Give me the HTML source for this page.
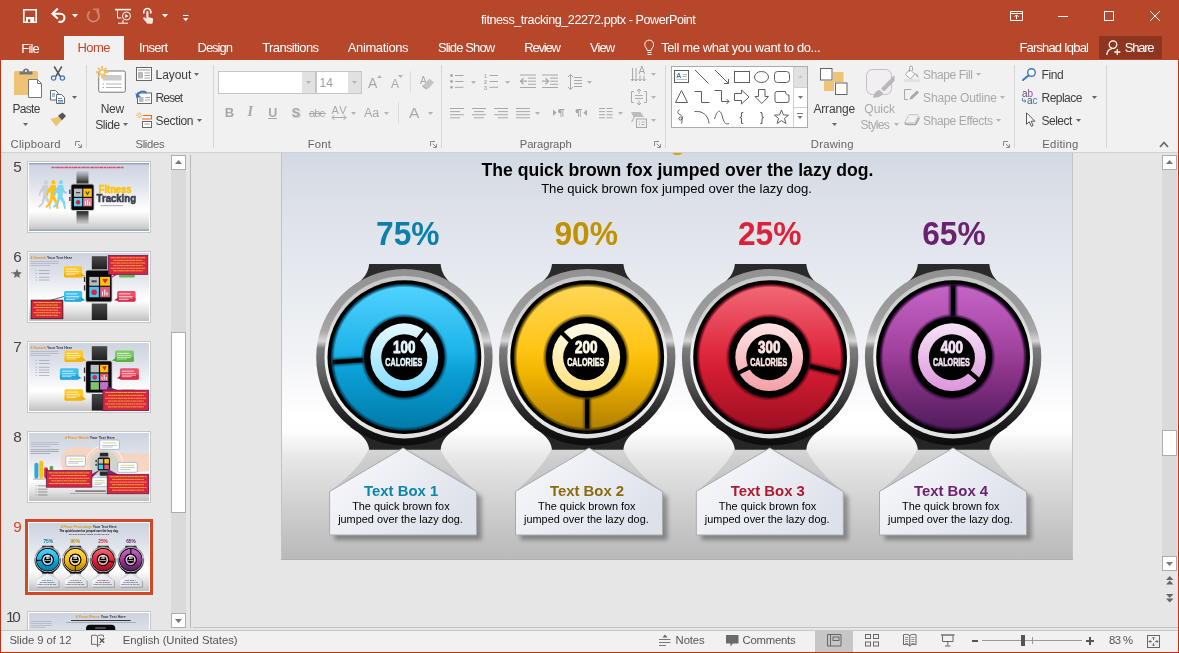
<!DOCTYPE html>
<html lang="en">
<head>
<meta charset="utf-8">
<title>fitness_tracking_22272.pptx - PowerPoint</title>
<style>
*{box-sizing:border-box;margin:0;padding:0}
html,body{width:1179px;height:653px;overflow:hidden;background:#e6e6e6}
body{font-family:"Liberation Sans",sans-serif;font-size:12px;color:#444;position:relative}
.t{position:absolute;white-space:nowrap;line-height:1.2}
#win{position:absolute;left:0;top:0;width:1179px;height:653px;overflow:hidden;background:#e6e6e6;will-change:transform}
#titlebar{position:absolute;left:0;top:0;width:1179px;height:60px;background:#b7472a}
#ribbon{position:absolute;left:0;top:60px;width:1179px;height:93px;background:#f1f1f1;border-bottom:1px solid #d2d2d2}
#status{position:absolute;left:0;top:630px;width:1179px;height:23px;background:#f1f1f1;border-top:1px solid #c8c8c8}
#hometab{position:absolute;left:64px;top:36px;width:60px;height:25px;background:#f1f1f1}
svg{position:absolute;overflow:visible}
</style>
</head>
<body>
<div id="win">
<div id="titlebar">
<div class="t" style="left:481px;top:13px;font-size:12.6px;color:#fff;letter-spacing:-0.45px;">fitness_tracking_22272.pptx - PowerPoint</div>
<div id="hometab"></div>
<div class="t" style="left:21.3px;top:41px;font-size:13px;color:#fff;letter-spacing:-0.85px;">File</div>
<div class="t" style="left:77.4px;top:40px;font-size:13px;color:#c4472c;letter-spacing:-0.56px;">Home</div>
<div class="t" style="left:139.1px;top:40px;font-size:13px;color:#fff;letter-spacing:-0.72px;">Insert</div>
<div class="t" style="left:197.5px;top:40px;font-size:13px;color:#fff;letter-spacing:-1.01px;">Design</div>
<div class="t" style="left:262.3px;top:40px;font-size:13px;color:#fff;letter-spacing:-0.64px;">Transitions</div>
<div class="t" style="left:347.8px;top:40px;font-size:13px;color:#fff;letter-spacing:-0.39px;">Animations</div>
<div class="t" style="left:438px;top:40px;font-size:13px;color:#fff;letter-spacing:-0.88px;">Slide Show</div>
<div class="t" style="left:524.2px;top:40px;font-size:13px;color:#fff;letter-spacing:-1.19px;">Review</div>
<div class="t" style="left:590px;top:40px;font-size:13px;color:#fff;letter-spacing:-0.91px;">View</div>
<div class="t" style="left:661.2px;top:40px;font-size:13px;color:#fff;letter-spacing:-0.41px;">Tell me what you want to do...</div>
<div class="t" style="left:1019.4px;top:40px;font-size:13px;color:#fff;letter-spacing:-0.83px;">Farshad Iqbal</div>
<div style="position:absolute;left:1099px;top:36px;width:63px;height:23px;background:#8e3520;"></div>
<div class="t" style="left:1124.8px;top:40px;font-size:13px;color:#fff;letter-spacing:-1.25px;">Share</div>
<svg style="left:23px;top:9px;" width="14" height="14" viewBox="0 0 14 14"><path d="M0.8 0.8h12.400v12.400h-12.400z" stroke="#fff" fill="none" stroke-width="1.600"/><rect x="3" y="8" width="8.200" height="5.200" fill="#fff"/><rect x="5" y="10.200" width="2.300" height="3" fill="#b7472a"/></svg>
<svg style="left:51px;top:8px;" width="16" height="15" viewBox="0 0 16 15"><path d="M3 5.700h6.400a4.100 4.100 0 0 1 0 8.200h-1.900" stroke="#fff" fill="none" stroke-width="2.100"/><path d="M6.800 0.600l-5.300 5.100l5.300 5.100" stroke="#fff" fill="none" stroke-width="2.100"/></svg>
<svg style="left:71.5px;top:14px;" width="6" height="4" viewBox="0 0 6 4"><path d="M0 0h6l-3 3.5z" fill="#fff"/></svg>
<svg style="left:86px;top:8px;" width="15" height="15" viewBox="0 0 15 15"><path d="M10.300 3.100a5.700 5.700 0 1 1 -6.300 0.300" stroke="#cf846f" fill="none" stroke-width="1.800"/><path d="M7.200 1.300h5v5" stroke="#cf846f" fill="none" stroke-width="1.800"/></svg>
<svg style="left:115px;top:8px;" width="17" height="16" viewBox="0 0 17 16"><path d="M0 1.6h16" stroke="#fff" fill="none" stroke-width="1.6"/><path d="M2.5 2v8h4" stroke="#fff" fill="none" stroke-width="1"/><circle cx="11.5" cy="8" r="4" stroke="#fff" fill="none" stroke-width="1"/><path d="M10.3 6l3 2l-3 2z" fill="#fff"/><path d="M3 15.2h10M8 12v3" stroke="#fff" fill="none" stroke-width="1"/></svg>
<svg style="left:142px;top:8px;" width="12" height="16" viewBox="0 0 12 16"><path d="M2 5.5a3.6 3.6 0 1 1 6.6 0" stroke="#fff" fill="none" stroke-width="1.5"/><path d="M4.3 4.2a1.1 1.1 0 0 1 2.2 0v5l3.6 0.8a1.3 1.3 0 0 1 1 1.4l-0.4 3.4a1.2 1.2 0 0 1 -1.2 1h-3.4a1.5 1.5 0 0 1 -1.2 -0.6l-3.6 -4.4a1 1 0 0 1 1.5 -1.3l1.5 1.3z" fill="#f2e6e2"/></svg>
<svg style="left:161.5px;top:14px;" width="6" height="4" viewBox="0 0 6 4"><path d="M0 0h6l-3 3.5z" fill="#fff"/></svg>
<svg style="left:183px;top:14.5px;" width="6" height="7" viewBox="0 0 6 7"><path d="M0 0.5h5.4" stroke="#fff" stroke-width="1"/><path d="M0 3h5.4l-2.7 3.2z" fill="#fff"/></svg>
<svg style="left:1010px;top:11px;" width="13" height="10" viewBox="0 0 13 10"><path d="M0.5 0.5h12v9h-12z M0.5 2.5h12" stroke="#fff" fill="none" stroke-width="1"/><path d="M6.5 8v-4M4.5 5.8l2-2l2 2" stroke="#fff" fill="none" stroke-width="1"/></svg>
<div style="position:absolute;left:1058px;top:16px;width:10px;height:1px;background:#fff;"></div>
<svg style="left:1104px;top:11px;" width="10" height="10" viewBox="0 0 10 10"><path d="M0.5 0.5h9v9h-9z" stroke="#fff" fill="none" stroke-width="1"/></svg>
<svg style="left:1150px;top:11px;" width="10" height="10" viewBox="0 0 10 10"><path d="M0 0l10 10M10 0l-10 10" stroke="#fff" fill="none" stroke-width="1"/></svg>
<svg style="left:644px;top:38.5px;" width="11" height="17" viewBox="0 0 11 17"><path d="M3.3 11.5c0-2-2.5-3-2.5-6a4.4 4.4 0 0 1 8.8 0c0 3-2.5 4-2.5 6z" stroke="#fff" fill="none" stroke-width="1"/><path d="M3.5 13.5h4M3.5 15.5h4" stroke="#fff" fill="none" stroke-width="1"/></svg>
<svg style="left:1106px;top:40px;" width="16" height="16" viewBox="0 0 16 16"><circle cx="7" cy="4.6" r="3.8" stroke="#fff" fill="none" stroke-width="1.3"/><path d="M0.8 15c0.3-3.6 2.5-6 5.4-6.3" stroke="#fff" fill="none" stroke-width="1.3"/><path d="M11.3 9v6M8.3 12h6" stroke="#fff" fill="none" stroke-width="1.3"/></svg>
</div>
<div id="ribbon"></div>
<div style="position:absolute;left:86px;top:65px;width:1px;height:83px;background:#d6d6d6;"></div>
<div style="position:absolute;left:213px;top:65px;width:1px;height:83px;background:#d6d6d6;"></div>
<div style="position:absolute;left:441px;top:65px;width:1px;height:83px;background:#d6d6d6;"></div>
<div style="position:absolute;left:665px;top:65px;width:1px;height:83px;background:#d6d6d6;"></div>
<div style="position:absolute;left:1014px;top:65px;width:1px;height:83px;background:#d6d6d6;"></div>
<div style="position:absolute;left:1106px;top:65px;width:1px;height:83px;background:#d6d6d6;"></div>
<div class="t" style="left:10.5px;top:138px;font-size:11.3px;color:#666;letter-spacing:0.22px;">Clipboard</div>
<div class="t" style="left:135.5px;top:138px;font-size:11.3px;color:#666;letter-spacing:-0.34px;">Slides</div>
<div class="t" style="left:307.8px;top:138px;font-size:11.3px;color:#666;letter-spacing:0.16px;">Font</div>
<div class="t" style="left:519.7px;top:138px;font-size:11.3px;color:#666;letter-spacing:-0.08px;">Paragraph</div>
<div class="t" style="left:810.8px;top:138px;font-size:11.3px;color:#666;letter-spacing:0.21px;">Drawing</div>
<div class="t" style="left:1042.3px;top:138px;font-size:11.3px;color:#666;letter-spacing:0.26px;">Editing</div>
<svg style="left:75px;top:141.3px" width="7" height="7" viewBox="0 0 7 7"><path d="M0.5 5v-4.5h4.5" stroke="#8a8a8a" fill="none" stroke-width="1"/><path d="M2.8 2.8l3.2 3.2M6.5 3.2v3.3h-3.3" stroke="#8a8a8a" fill="none" stroke-width="1"/></svg>
<svg style="left:430px;top:141.3px" width="7" height="7" viewBox="0 0 7 7"><path d="M0.5 5v-4.5h4.5" stroke="#8a8a8a" fill="none" stroke-width="1"/><path d="M2.8 2.8l3.2 3.2M6.5 3.2v3.3h-3.3" stroke="#8a8a8a" fill="none" stroke-width="1"/></svg>
<svg style="left:654px;top:141.3px" width="7" height="7" viewBox="0 0 7 7"><path d="M0.5 5v-4.5h4.5" stroke="#8a8a8a" fill="none" stroke-width="1"/><path d="M2.8 2.8l3.2 3.2M6.5 3.2v3.3h-3.3" stroke="#8a8a8a" fill="none" stroke-width="1"/></svg>
<svg style="left:1003px;top:141.3px" width="7" height="7" viewBox="0 0 7 7"><path d="M0.5 5v-4.5h4.5" stroke="#8a8a8a" fill="none" stroke-width="1"/><path d="M2.8 2.8l3.2 3.2M6.5 3.2v3.3h-3.3" stroke="#8a8a8a" fill="none" stroke-width="1"/></svg>
<svg style="left:14px;top:68px;" width="28" height="30" viewBox="0 0 28 30"><path d="M0 4.5a1.5 1.5 0 0 1 1.5 -1.5h21a1.5 1.5 0 0 1 1.5 1.5v22.5h-24z" fill="#eec373"/><path d="M5.5 6.5v-3h3.5a3 3 0 0 1 6 0h3.5v3z" fill="#777"/><circle cx="12" cy="3" r="1.1" fill="#f1f1f1"/><path d="M14.5 11.5h9l4 4v14h-13z" fill="#fff" stroke="#777" stroke-width="1"/><path d="M23.5 11.5v4h4" fill="none" stroke="#777" stroke-width="1"/></svg>
<div class="t" style="left:12.4px;top:102px;font-size:12px;color:#3e3e3e;letter-spacing:-0.65px;">Paste</div>
<svg style="left:23px;top:123px" width="5" height="3" viewBox="0 0 5 3"><path d="M0 0h5l-2.5 3z" fill="#666"/></svg>
<svg style="left:51px;top:66px;" width="14" height="15" viewBox="0 0 14 15"><path d="M3.2 0.5l6 10M10.8 0.5l-6 10" stroke="#555" stroke-width="1.5" fill="none"/><circle cx="2.6" cy="12" r="2.2" fill="none" stroke="#3a78c0" stroke-width="1.2"/><circle cx="11.4" cy="12" r="2.2" fill="none" stroke="#3a78c0" stroke-width="1.2"/></svg>
<svg style="left:50px;top:90px;" width="15" height="14" viewBox="0 0 15 14"><path d="M0.5 0.5h5l2.5 2.5v7h-7.500z" fill="#fff" stroke="#666"/><path d="M2 4h3M2 6h3" stroke="#3a78c0"/><path d="M6.5 4.500h5l3 3v6h-8z" fill="#fff" stroke="#666"/><path d="M8 8.500h4M8 10.500h5M8 12h5" stroke="#3a78c0" stroke-width="0.9"/></svg>
<svg style="left:72px;top:96.3px" width="5" height="3" viewBox="0 0 5 3"><path d="M0 0h5l-2.5 3z" fill="#666"/></svg>
<svg style="left:50px;top:112px;" width="17" height="15" viewBox="0 0 17 15"><path d="M0.500 7l8.500 -2.500l3 3.500l-6 6.500z" fill="#eec373"/><path d="M8 3.800l4.500 -3.300l3.500 3.500l-4 4.200z" fill="#555"/></svg>
<svg style="left:96px;top:66px;" width="30" height="28" viewBox="0 0 30 28"><rect x="2.700" y="5" width="26.600" height="21.200" rx="1.500" fill="#fff" stroke="#777" stroke-width="1"/><rect x="7" y="9" width="18.500" height="5.500" fill="#ccc"/><path d="M10 18h15.500M10 21.500h15.500" stroke="#aaa" stroke-width="0.9"/><path d="M6.500 18h1.500M6.500 21.500h1.500" stroke="#aaa"/><g stroke="#eec06a" stroke-width="1.900"><path d="M6.200 0v12.400M0 6.200h12.400M1.800 1.800l8.800 8.800M10.600 1.800l-8.800 8.800"/></g><circle cx="6.200" cy="6.200" r="1.700" fill="#fdfdfd"/></svg>
<div class="t" style="left:100.7px;top:102px;font-size:12px;color:#3e3e3e;letter-spacing:-0.30px;">New</div>
<div class="t" style="left:95.3px;top:118px;font-size:12px;color:#3e3e3e;letter-spacing:-0.47px;">Slide</div>
<svg style="left:123px;top:123px" width="5" height="3" viewBox="0 0 5 3"><path d="M0 0h5l-2.5 3z" fill="#666"/></svg>
<svg style="left:136px;top:67px;" width="16" height="14" viewBox="0 0 16 14"><rect x="0.500" y="0.500" width="15" height="13" fill="#fff" stroke="#666"/><path d="M2 3h12" stroke="#999"/><rect x="2" y="5" width="5" height="6.500" fill="#bbb"/><path d="M8.500 6h5.500M8.500 8.500h5.500M8.500 11h5.500" stroke="#999" stroke-width="0.9"/></svg>
<div class="t" style="left:155.6px;top:68px;font-size:12px;color:#3e3e3e;letter-spacing:-0.07px;">Layout</div>
<svg style="left:194px;top:73.3px" width="5" height="3" viewBox="0 0 5 3"><path d="M0 0h5l-2.5 3z" fill="#666"/></svg>
<svg style="left:136px;top:90px;" width="16" height="14" viewBox="0 0 16 14"><rect x="1.500" y="3" width="14" height="10.500" fill="#fff" stroke="#666"/><rect x="3" y="7" width="4.500" height="5" fill="#bbb"/><path d="M9 7.500h5M9 10h5" stroke="#999" stroke-width="0.900"/><path d="M1.500 6c0.800 -4.200 5 -5.800 9 -3.200" fill="none" stroke="#3a78c0" stroke-width="1.900"/><path d="M-0.500 3l0.800 5.200l4.700 -1.700z" fill="#3a78c0"/></svg>
<div class="t" style="left:155.6px;top:91px;font-size:12px;color:#3e3e3e;letter-spacing:-0.99px;">Reset</div>
<svg style="left:136px;top:112px;" width="16" height="16" viewBox="0 0 16 16"><g stroke="#eec06a" stroke-width="1"><path d="M3.300 0v6.600M0 3.300h6.600M1 1l4.600 4.600M5.600 1l-4.600 4.600"/></g><circle cx="3.300" cy="3.300" r="0.900" fill="#fdfdfd"/><path d="M7 3.500h8.500v3.500h-9.500" fill="none" stroke="#e56a20" stroke-width="1.100"/><rect x="6.500" y="9.500" width="9" height="6" fill="#fff" stroke="#666"/><rect x="8.500" y="11.300" width="5" height="1.500" fill="#bbb"/></svg>
<div class="t" style="left:155.6px;top:114px;font-size:12px;color:#3e3e3e;letter-spacing:-0.35px;">Section</div>
<svg style="left:197px;top:119.3px" width="5" height="3" viewBox="0 0 5 3"><path d="M0 0h5l-2.5 3z" fill="#666"/></svg>
<div style="position:absolute;left:218px;top:71px;width:98px;height:23px;background:#fff;border:1px solid #c6c6c6;"></div>
<div style="position:absolute;left:302px;top:72px;width:13px;height:21px;background:#e1e1e1;"></div>
<svg style="left:306px;top:81px" width="5" height="3" viewBox="0 0 5 3"><path d="M0 0h5l-2.5 3z" fill="#b4b4b4"/></svg>
<div style="position:absolute;left:316px;top:71px;width:46px;height:23px;background:#fff;border:1px solid #c6c6c6;"></div>
<div style="position:absolute;left:348px;top:72px;width:13px;height:21px;background:#e1e1e1;"></div>
<svg style="left:352px;top:81px" width="5" height="3" viewBox="0 0 5 3"><path d="M0 0h5l-2.5 3z" fill="#b4b4b4"/></svg>
<div class="t" style="left:319.5px;top:76px;font-size:12px;color:#a0a0a0;">14</div>
<div class="t" style="left:368px;top:75px;font-size:14px;color:#a8a8a8;letter-spacing:-0.24px;">A</div>
<svg style="left:377px;top:75px" width="5" height="3" viewBox="0 0 5 3"><path d="M0 3h5l-2.5 -3z" fill="#b4b4b4"/></svg>
<div class="t" style="left:391px;top:77px;font-size:12px;color:#a8a8a8;letter-spacing:0.10px;">A</div>
<svg style="left:398px;top:75px" width="5" height="3" viewBox="0 0 5 3"><path d="M0 0h5l-2.5 3z" fill="#b4b4b4"/></svg>
<div style="position:absolute;left:410px;top:71px;width:1px;height:22px;background:#dcdcdc;"></div>
<svg style="left:420px;top:75px;" width="15" height="15" viewBox="0 0 15 15"><text x="0" y="8.500" font-family="Liberation Sans, sans-serif" font-size="10" fill="#a8a8a8">A</text><path d="M9.500 3.500l4.500 4l-6 6.500l-4.500 -4z" fill="#c4c4c4"/><path d="M2.500 10.500l4 3.500" stroke="#a8a8a8" stroke-width="1.500"/></svg>
<div class="t" style="left:224.7px;top:105px;font-size:13px;color:#a8a8a8;font-weight:bold;">B</div>
<div class="t" style="left:247.5px;top:104px;font-size:14px;color:#a8a8a8;font-weight:bold;font-style:italic;font-family:'Liberation Serif',serif;">I</div>
<div class="t" style="left:268.2px;top:106px;font-size:12.5px;color:#a8a8a8;font-weight:bold;">U</div>
<div style="position:absolute;left:268px;top:118px;width:9px;height:1px;background:#a8a8a8;"></div>
<div class="t" style="left:291.5px;top:105px;font-size:13px;color:#a8a8a8;font-weight:bold;text-shadow:1px 1px 1px #c8c8c8;">S</div>
<div class="t" style="left:309px;top:107px;font-size:11px;color:#a8a8a8;letter-spacing:-0.82px;">abc</div>
<div style="position:absolute;left:309px;top:113px;width:17px;height:1px;background:#a8a8a8;"></div>
<div class="t" style="left:331.5px;top:104px;font-size:11px;color:#a8a8a8;letter-spacing:1.24px;">AV</div>
<svg style="left:331px;top:115px;" width="16" height="5" viewBox="0 0 16 5"><path d="M1 2.500h14M3.500 0l-2.500 2.500l2.500 2.500M12.500 0l2.500 2.500l-2.500 2.500" fill="none" stroke="#a8a8a8" stroke-width="1"/></svg>
<svg style="left:351px;top:112px" width="5" height="3" viewBox="0 0 5 3"><path d="M0 0h5l-2.5 3z" fill="#b4b4b4"/></svg>
<div class="t" style="left:364.1px;top:106px;font-size:12.5px;color:#a8a8a8;letter-spacing:-0.19px;">Aa</div>
<svg style="left:384px;top:112px" width="5" height="3" viewBox="0 0 5 3"><path d="M0 0h5l-2.5 3z" fill="#b4b4b4"/></svg>
<div style="position:absolute;left:398px;top:102px;width:1px;height:22px;background:#dcdcdc;"></div>
<div class="t" style="left:409px;top:104px;font-size:15.5px;color:#a8a8a8;letter-spacing:-0.24px;">A</div>
<svg style="left:428px;top:112px" width="5" height="3" viewBox="0 0 5 3"><path d="M0 0h5l-2.5 3z" fill="#b4b4b4"/></svg>
<svg style="left:450px;top:74px;" width="14" height="15" viewBox="0 0 14 15"><circle cx="1.500" cy="1.5" r="1.400" fill="#a8a8a8"/><rect x="5" y="1.0" width="8.5" height="1" fill="#a8a8a8"/><circle cx="1.500" cy="7.5" r="1.400" fill="#a8a8a8"/><rect x="5" y="7.0" width="8.5" height="1" fill="#a8a8a8"/><circle cx="1.500" cy="13.3" r="1.400" fill="#a8a8a8"/><rect x="5" y="12.8" width="8.5" height="1" fill="#a8a8a8"/></svg>
<svg style="left:471px;top:81px" width="5" height="3" viewBox="0 0 5 3"><path d="M0 0h5l-2.5 3z" fill="#b4b4b4"/></svg>
<svg style="left:484px;top:74px;" width="14" height="15" viewBox="0 0 14 15"><text x="0" y="3.7" font-family="Liberation Sans, sans-serif" font-size="5.500" font-weight="bold" fill="#a8a8a8">1</text><rect x="5.5" y="1.0" width="8.5" height="1" fill="#a8a8a8"/><text x="0" y="9.7" font-family="Liberation Sans, sans-serif" font-size="5.500" font-weight="bold" fill="#a8a8a8">2</text><rect x="5.5" y="7.0" width="8.5" height="1" fill="#a8a8a8"/><text x="0" y="15.5" font-family="Liberation Sans, sans-serif" font-size="5.500" font-weight="bold" fill="#a8a8a8">3</text><rect x="5.5" y="12.8" width="8.5" height="1" fill="#a8a8a8"/></svg>
<svg style="left:505px;top:81px" width="5" height="3" viewBox="0 0 5 3"><path d="M0 0h5l-2.5 3z" fill="#b4b4b4"/></svg>
<svg style="left:520px;top:74px;" width="16" height="15" viewBox="0 0 16 15"><rect x="0" y="0.5" width="16" height="1" fill="#a8a8a8"/><rect x="0" y="13" width="16" height="1" fill="#a8a8a8"/><rect x="8" y="3.6" width="8" height="1" fill="#a8a8a8"/><rect x="8" y="6.7" width="8" height="1" fill="#a8a8a8"/><rect x="8" y="9.8" width="8" height="1" fill="#a8a8a8"/><path d="M0.500 7.200h6.500M3.500 4.200l-3 3l3 3" fill="none" stroke="#a8a8a8" stroke-width="1.300"/></svg>
<svg style="left:542px;top:74px;" width="16" height="15" viewBox="0 0 16 15"><rect x="0" y="0.5" width="16" height="1" fill="#a8a8a8"/><rect x="0" y="13" width="16" height="1" fill="#a8a8a8"/><rect x="8" y="3.6" width="8" height="1" fill="#a8a8a8"/><rect x="8" y="6.7" width="8" height="1" fill="#a8a8a8"/><rect x="8" y="9.8" width="8" height="1" fill="#a8a8a8"/><path d="M0 7.200h6.500M3.500 4.200l3 3l-3 3" fill="none" stroke="#a8a8a8" stroke-width="1.300"/></svg>
<svg style="left:568px;top:74px;" width="14" height="16" viewBox="0 0 14 16"><rect x="6" y="3" width="8" height="1" fill="#a8a8a8"/><rect x="6" y="6" width="8" height="1" fill="#a8a8a8"/><rect x="6" y="9" width="8" height="1" fill="#a8a8a8"/><rect x="6" y="12" width="8" height="1" fill="#a8a8a8"/><path d="M2.500 0.500v15M0 3l2.500 -2.500l2.500 2.500M0 13l2.500 2.500l2.500 -2.500" fill="none" stroke="#a8a8a8" stroke-width="1"/></svg>
<svg style="left:587px;top:81px" width="5" height="3" viewBox="0 0 5 3"><path d="M0 0h5l-2.5 3z" fill="#b4b4b4"/></svg>
<svg style="left:450px;top:108px;" width="14" height="11" viewBox="0 0 14 11"><rect x="0" y="0.0" width="14" height="1" fill="#a8a8a8"/><rect x="0" y="3.1" width="10" height="1" fill="#a8a8a8"/><rect x="0" y="6.2" width="14" height="1" fill="#a8a8a8"/><rect x="0" y="9.3" width="10" height="1" fill="#a8a8a8"/></svg>
<svg style="left:472px;top:108px;" width="14" height="11" viewBox="0 0 14 11"><rect x="0.0" y="0.0" width="14" height="1" fill="#a8a8a8"/><rect x="2.0" y="3.1" width="10" height="1" fill="#a8a8a8"/><rect x="0.0" y="6.2" width="14" height="1" fill="#a8a8a8"/><rect x="2.0" y="9.3" width="10" height="1" fill="#a8a8a8"/></svg>
<svg style="left:494px;top:108px;" width="14" height="11" viewBox="0 0 14 11"><rect x="0" y="0.0" width="14" height="1" fill="#a8a8a8"/><rect x="4" y="3.1" width="10" height="1" fill="#a8a8a8"/><rect x="0" y="6.2" width="14" height="1" fill="#a8a8a8"/><rect x="4" y="9.3" width="10" height="1" fill="#a8a8a8"/></svg>
<svg style="left:516px;top:108px;" width="14" height="11" viewBox="0 0 14 11"><rect x="0" y="0.0" width="14" height="1" fill="#a8a8a8"/><rect x="0" y="3.1" width="14" height="1" fill="#a8a8a8"/><rect x="0" y="6.2" width="14" height="1" fill="#a8a8a8"/><rect x="0" y="9.3" width="14" height="1" fill="#a8a8a8"/></svg>
<svg style="left:535px;top:112px" width="5" height="3" viewBox="0 0 5 3"><path d="M0 0h5l-2.5 3z" fill="#b4b4b4"/></svg>
<svg style="left:553px;top:109px;" width="12" height="8" viewBox="0 0 12 8"><path d="M0 0.500l3.500 3.300l-3.500 3.300z" fill="#a8a8a8"/><g transform="translate(3.500,0)"><path d="M3.200 0h4.800v0.900h-1.200v7.100h-0.900v-7.100h-1v7.100h-0.900v-3.800a2.100 2.100 0 0 1 -0.800 -4.200z" fill="#a8a8a8"/></g></svg>
<svg style="left:575px;top:109px;" width="12" height="8" viewBox="0 0 12 8"><g transform="translate(-1,0)"><path d="M3.200 0h4.800v0.900h-1.200v7.100h-0.900v-7.100h-1v7.100h-0.900v-3.800a2.100 2.100 0 0 1 -0.800 -4.200z" fill="#a8a8a8"/></g><path d="M12 0.500l-3.500 3.300l3.500 3.300z" fill="#a8a8a8"/></svg>
<svg style="left:599px;top:108px;" width="14" height="11" viewBox="0 0 14 11"><rect x="0" y="0.0" width="6" height="1" fill="#a8a8a8"/><rect x="7.5" y="0.0" width="6" height="1" fill="#a8a8a8"/><rect x="0" y="3.1" width="6" height="1" fill="#a8a8a8"/><rect x="7.5" y="3.1" width="6" height="1" fill="#a8a8a8"/><rect x="0" y="6.2" width="6" height="1" fill="#a8a8a8"/><rect x="7.5" y="6.2" width="6" height="1" fill="#a8a8a8"/><rect x="0" y="9.3" width="6" height="1" fill="#a8a8a8"/><rect x="7.5" y="9.3" width="6" height="1" fill="#a8a8a8"/></svg>
<svg style="left:618px;top:112px" width="5" height="3" viewBox="0 0 5 3"><path d="M0 0h5l-2.5 3z" fill="#b4b4b4"/></svg>
<svg style="left:631px;top:66px;" width="16" height="16" viewBox="0 0 16 16"><path d="M1.500 2v13M5 2v13M9 9.500v5.500M13 9.500v5.500" stroke="#a8a8a8" stroke-width="1" fill="none"/><path d="M0 13l1.500 2l1.500 -2M3.500 13l1.500 2l1.500 -2M7.500 13l1.500 2l1.500 -2M11.500 13l1.500 2l1.500 -2" fill="none" stroke="#a8a8a8" stroke-width="1"/><text x="7.500" y="8" font-family="Liberation Sans, sans-serif" font-size="10" fill="#a8a8a8">A</text></svg>
<svg style="left:651px;top:73px" width="5" height="3" viewBox="0 0 5 3"><path d="M0 0h5l-2.5 3z" fill="#b4b4b4"/></svg>
<svg style="left:631px;top:89px;" width="16" height="16" viewBox="0 0 16 16"><path d="M3 2.500h-2.500v11h2.500M13 2.500h2.500v11h-2.500" fill="none" stroke="#a8a8a8"/><rect x="2" y="4" width="12" height="8" fill="#f3eef3"/><path d="M4 6.500h8M4 9.500h8" stroke="#a8a8a8" stroke-width="0.900"/><path d="M8 0v4.500M6 2l2 -2l2 2M8 16v-4.500M6 14l2 2l2 -2" fill="none" stroke="#a8a8a8" stroke-width="1"/></svg>
<svg style="left:651px;top:96px" width="5" height="3" viewBox="0 0 5 3"><path d="M0 0h5l-2.5 3z" fill="#b4b4b4"/></svg>
<svg style="left:631px;top:112px;" width="16" height="16" viewBox="0 0 16 16"><path d="M0 0h9.500l3.500 5h-9l-2.500 5h-1.500l2.500 -5z" fill="#bdbdbd"/><rect x="5.500" y="7" width="10" height="8.500" fill="#f3eef3" stroke="#a8a8a8"/><path d="M8 10h1M10.500 10h3M8 12.500h1M10.500 12.500h3" stroke="#a8a8a8" stroke-width="0.900"/></svg>
<svg style="left:651px;top:119px" width="5" height="3" viewBox="0 0 5 3"><path d="M0 0h5l-2.5 3z" fill="#b4b4b4"/></svg>
<div style="position:absolute;left:671px;top:66px;width:137px;height:62px;background:#fff;border:1px solid #ababab;"></div>
<div style="position:absolute;left:793px;top:67px;width:1px;height:60px;background:#d0d0d0;"></div>
<div style="position:absolute;left:794px;top:67px;width:13px;height:20px;background:#e1e1e1;"></div>
<div style="position:absolute;left:794px;top:87px;width:13px;height:1px;background:#d0d0d0;"></div>
<div style="position:absolute;left:794px;top:107px;width:13px;height:1px;background:#d0d0d0;"></div>
<svg style="left:798px;top:75px" width="5" height="3" viewBox="0 0 5 3"><path d="M0 3h5l-2.5 -3z" fill="#c6c6c6"/></svg>
<svg style="left:798px;top:96px" width="5" height="3" viewBox="0 0 5 3"><path d="M0 0h5l-2.5 3z" fill="#777"/></svg>
<svg style="left:797px;top:113px;" width="7" height="7" viewBox="0 0 7 7"><path d="M0 0.500h6" stroke="#777"/><path d="M0.500 3h5l-2.500 3z" fill="#777"/></svg>
<svg style="left:674px;top:69px" width="16" height="16" viewBox="0 0 16 16"><rect x="0.500" y="1.500" width="14" height="12" fill="#fff" stroke="#5e5e5e" stroke-width="1"/><text x="2.200" y="8.500" font-family="Liberation Sans, sans-serif" font-size="7" font-weight="bold" fill="#3a78c0">A</text><path d="M8.500 5.500h4.500M8.500 7.500h4.500M2.500 10.500h10.500" stroke="#aaa" stroke-width="0.800"/></svg>
<svg style="left:694px;top:69px" width="16" height="16" viewBox="0 0 16 16"><path d="M1 1l13.500 13.500" fill="none" stroke="#5e5e5e" stroke-width="1"/></svg>
<svg style="left:714px;top:69px" width="16" height="16" viewBox="0 0 16 16"><path d="M1 1l13.500 13.500M14.500 10v4.500h-4.500" fill="none" stroke="#5e5e5e" stroke-width="1"/></svg>
<svg style="left:734px;top:69px" width="16" height="16" viewBox="0 0 16 16"><rect x="0.500" y="2.500" width="15" height="11" fill="none" stroke="#5e5e5e" stroke-width="1"/></svg>
<svg style="left:754px;top:69px" width="16" height="16" viewBox="0 0 16 16"><ellipse cx="7.500" cy="8" rx="7" ry="5.500" fill="none" stroke="#5e5e5e" stroke-width="1"/></svg>
<svg style="left:774px;top:69px" width="16" height="16" viewBox="0 0 16 16"><rect x="0.500" y="2.500" width="15" height="11" rx="3" fill="none" stroke="#5e5e5e" stroke-width="1"/></svg>
<svg style="left:674px;top:89px" width="16" height="16" viewBox="0 0 16 16"><path d="M7.500 1.500l6 12h-12z" fill="none" stroke="#5e5e5e" stroke-width="1"/></svg>
<svg style="left:694px;top:89px" width="16" height="16" viewBox="0 0 16 16"><path d="M0.500 2.500h7v11h8" fill="none" stroke="#5e5e5e" stroke-width="1"/></svg>
<svg style="left:714px;top:89px" width="16" height="16" viewBox="0 0 16 16"><path d="M0.500 1.500h7v11h7.500M12.500 10l2.500 2.500l-2.500 2.500" fill="none" stroke="#5e5e5e" stroke-width="1"/></svg>
<svg style="left:734px;top:89px" width="16" height="16" viewBox="0 0 16 16"><path d="M0.500 4.500h7v-3.500l7.500 7l-7.500 7v-3.500h-7z" fill="none" stroke="#5e5e5e" stroke-width="1"/></svg>
<svg style="left:754px;top:89px" width="16" height="16" viewBox="0 0 16 16"><path d="M4.500 0.500h6.500v7h3.500l-6.700 7l-6.800 -7h3.500z" fill="none" stroke="#5e5e5e" stroke-width="1"/></svg>
<svg style="left:774px;top:89px" width="16" height="16" viewBox="0 0 16 16"><path d="M3 2.500h8.500a3 3 0 0 0 3.500 3.500v5.500a2 2 0 0 1 -2 2h-10a2 2 0 0 1 -2 -2v-7a2 2 0 0 1 2 -2z" fill="none" stroke="#5e5e5e" stroke-width="1"/></svg>
<svg style="left:674px;top:109px" width="16" height="16" viewBox="0 0 16 16"><path d="M5.500 0.500c-5.500 5.500 3.500 4 3 8.500c-0.500 3 -4.500 2.500 -3.500 0s4.500 -0.500 2.500 5.500" fill="none" stroke="#5e5e5e" stroke-width="1"/></svg>
<svg style="left:694px;top:109px" width="16" height="16" viewBox="0 0 16 16"><path d="M0.500 2.500c8 -1 14 4 14.500 12" fill="none" stroke="#5e5e5e" stroke-width="1"/></svg>
<svg style="left:714px;top:109px" width="16" height="16" viewBox="0 0 16 16"><path d="M0.500 10c3 -10 6 -10 8 -2s4 7 6.500 6.500" fill="none" stroke="#5e5e5e" stroke-width="1"/></svg>
<div class="t" style="left:739.5px;top:110px;font-size:12px;color:#555;">{</div>
<div class="t" style="left:760px;top:110px;font-size:12px;color:#555;">}</div>
<svg style="left:774px;top:109px" width="16" height="16" viewBox="0 0 16 16"><path d="M7.500 1l1.900 4.900l5.100 0.300l-4 3.200l1.400 5.100l-4.400 -2.900l-4.400 2.900l1.400 -5.100l-4 -3.200l5.100 -0.300z" fill="none" stroke="#5e5e5e" stroke-width="1"/></svg>
<svg style="left:820px;top:68px;" width="28" height="27" viewBox="0 0 28 27"><rect x="13" y="4" width="10.500" height="10" fill="#eec373"/><rect x="4" y="13" width="10" height="10" fill="#eec373"/><rect x="0.500" y="0.500" width="11.500" height="11.500" fill="#fff" stroke="#666"/><rect x="15.500" y="15" width="11.500" height="11.500" fill="#fff" stroke="#666"/></svg>
<div class="t" style="left:813.4px;top:102px;font-size:12px;color:#3e3e3e;letter-spacing:-0.15px;">Arrange</div>
<svg style="left:832px;top:123px" width="5" height="3" viewBox="0 0 5 3"><path d="M0 0h5l-2.5 3z" fill="#666"/></svg>
<svg style="left:866px;top:69px;" width="29" height="29" viewBox="0 0 29 29"><rect x="0.500" y="0.500" width="25" height="25" rx="6" fill="#f3eef3" stroke="#c0c0c0"/><path d="M7 28.500c1 -4 3 -7 6.500 -7.500l3.500 3c-1 3 -4 5 -10 4.500z" fill="#b8b8b8"/><path d="M15 19.500l13.500 -13.500v6l-10.500 10.500z" fill="#b8b8b8"/></svg>
<div class="t" style="left:864.3px;top:102px;font-size:12px;color:#a8a8a8;letter-spacing:0.01px;">Quick</div>
<div class="t" style="left:860.4px;top:118px;font-size:12px;color:#a8a8a8;letter-spacing:-0.64px;">Styles</div>
<svg style="left:893.5px;top:123px" width="5" height="3" viewBox="0 0 5 3"><path d="M0 0h5l-2.5 3z" fill="#b4b4b4"/></svg>
<svg style="left:904px;top:66px;" width="16" height="16" viewBox="0 0 16 16"><path d="M5.500 3.500l5.500 4.500l-4.500 5l-5 -4.500z" fill="#fff" stroke="#a8a8a8"/><path d="M5.500 6v-4.500a1.500 1.500 0 0 1 3 0v3" fill="none" stroke="#a8a8a8"/><path d="M11 7.500c2 0 3.500 2 3.500 4.500c-1.500 -1 -2.500 -2 -3.500 -4.500z" fill="#a8a8a8"/><rect x="0" y="13" width="16" height="3" fill="#e6dfe6"/></svg>
<div class="t" style="left:923.1px;top:68px;font-size:12px;color:#a8a8a8;letter-spacing:-0.38px;">Shape Fill</div>
<svg style="left:976px;top:73.3px" width="5" height="3" viewBox="0 0 5 3"><path d="M0 0h5l-2.5 3z" fill="#b4b4b4"/></svg>
<svg style="left:904px;top:89px;" width="16" height="12" viewBox="0 0 16 12"><path d="M7.500 0.500h-7v10h3.500" fill="none" stroke="#a8a8a8"/><path d="M5.500 10.800l1 -3l6.500 -6.300l2 2l-6.500 6.300z" fill="#a8a8a8"/></svg>
<div class="t" style="left:923.1px;top:91px;font-size:12px;color:#a8a8a8;letter-spacing:-0.18px;">Shape Outline</div>
<svg style="left:1000px;top:96.3px" width="5" height="3" viewBox="0 0 5 3"><path d="M0 0h5l-2.5 3z" fill="#b4b4b4"/></svg>
<svg style="left:904px;top:114px;" width="16" height="12" viewBox="0 0 16 12"><path d="M1.200 7.500l3.300 -6a1.500 1.500 0 0 1 1.300 -0.800h7.700a1 1 0 0 1 0.900 1.500l-3.100 6a1.500 1.500 0 0 1 -1.300 0.800h-7.900a1 1 0 0 1 -0.900 -1.500z" fill="#f3eef3" stroke="#bcbcbc" stroke-width="0.900"/><path d="M1 8.800c0.300 1.200 1 1.700 2 1.700h7.500c1 0 1.500 -0.500 2 -1.300l2.800 -5.700" fill="none" stroke="#a8a8a8" stroke-width="1.700"/></svg>
<div class="t" style="left:923.1px;top:114px;font-size:12px;color:#a8a8a8;letter-spacing:-0.39px;">Shape Effects</div>
<svg style="left:996px;top:119.3px" width="5" height="3" viewBox="0 0 5 3"><path d="M0 0h5l-2.5 3z" fill="#b4b4b4"/></svg>
<svg style="left:1022px;top:68px;" width="15" height="13" viewBox="0 0 15 13"><circle cx="9.500" cy="4.500" r="3.800" fill="#fff" stroke="#3a78c0" stroke-width="1.400"/><path d="M6.500 7.500l-5.500 4.500" stroke="#3a78c0" stroke-width="2" stroke-linecap="round"/></svg>
<div class="t" style="left:1041.6px;top:68px;font-size:12px;color:#3e3e3e;letter-spacing:-0.41px;">Find</div>
<div class="t" style="left:1022px;top:88px;font-size:10px;color:#555;">a</div>
<div class="t" style="left:1027.5px;top:88px;font-size:10px;color:#8a4fb0;">b</div>
<div class="t" style="left:1027px;top:95px;font-size:10px;color:#555;">a</div>
<div class="t" style="left:1032.5px;top:95px;font-size:10px;color:#3a78c0;">c</div>
<svg style="left:1022px;top:98px;" width="5" height="5" viewBox="0 0 5 5"><path d="M0.500 0v3h3.500M2.500 1.500l1.500 1.500l-1.500 1.500" fill="none" stroke="#3a78c0" stroke-width="0.900"/></svg>
<div class="t" style="left:1041.6px;top:91px;font-size:12px;color:#3e3e3e;letter-spacing:-0.54px;">Replace</div>
<svg style="left:1092px;top:96.3px" width="5" height="3" viewBox="0 0 5 3"><path d="M0 0h5l-2.5 3z" fill="#666"/></svg>
<svg style="left:1025px;top:112px;" width="11" height="15" viewBox="0 0 11 15"><path d="M1.500 0.800v11.500l2.800 -2.500l2 4.500l1.800 -0.800l-2 -4.300h3.700z" fill="#fff" stroke="#555" stroke-width="1"/></svg>
<div class="t" style="left:1041.6px;top:114px;font-size:12px;color:#3e3e3e;letter-spacing:-0.53px;">Select</div>
<svg style="left:1075.5px;top:119.3px" width="5" height="3" viewBox="0 0 5 3"><path d="M0 0h5l-2.5 3z" fill="#666"/></svg>
<svg style="left:1159px;top:141px;" width="10" height="7" viewBox="0 0 10 7"><path d="M1 6l4 -4.500l4 4.500" fill="none" stroke="#666" stroke-width="1.600"/></svg>
<div style="position:absolute;left:171px;top:155px;width:15px;height:473px;background:#dadada;"></div>
<div style="position:absolute;left:171px;top:155px;width:15px;height:15px;background:#fff;border:1px solid #adadad;"></div>
<svg style="left:175px;top:160px;" width="7" height="4" viewBox="0 0 7 4"><path d="M0 4h7l-3.500 -4z" fill="#777"/></svg>
<div style="position:absolute;left:171px;top:332px;width:15px;height:181px;background:#fff;border:1px solid #adadad;"></div>
<div style="position:absolute;left:171px;top:613px;width:15px;height:15px;background:#fff;border:1px solid #adadad;"></div>
<svg style="left:175px;top:619px;" width="7" height="4" viewBox="0 0 7 4"><path d="M0 0h7l-3.500 4z" fill="#777"/></svg>
<div style="position:absolute;left:190px;top:155px;width:1px;height:473px;background:#b8b8b8;"></div>
<div class="t" style="left:13.3px;top:158px;font-size:15.3px;color:#444;">5</div>
<div class="t" style="left:13.3px;top:248px;font-size:15.3px;color:#444;">6</div>
<div class="t" style="left:13.3px;top:338px;font-size:15.3px;color:#444;">7</div>
<div class="t" style="left:13.3px;top:428px;font-size:15.3px;color:#444;">8</div>
<div class="t" style="left:13.3px;top:518px;font-size:15.3px;color:#d24726;">9</div>
<div class="t" style="left:6px;top:608px;font-size:15.3px;color:#444;letter-spacing:-2.32px;">10</div>
<svg style="left:11.5px;top:268.5px;" width="10" height="9" viewBox="0 0 10 9"><path d="M5 0l1.400 3.100l3.400 0.300l-2.600 2.300l0.800 3.300l-3 -1.800l-3 1.800l0.800 -3.300l-2.600 -2.300l3.400 -0.300z" fill="#6a6a6a"/><path d="M-1 3.800h1.500" stroke="#6a6a6a" stroke-width="0.8"/></svg>
<div style="position:absolute;left:27px;top:161px;width:124px;height:72px;background:#fff;border:1px solid #c6c6c6;"></div>
<div style="position:absolute;left:27px;top:251px;width:124px;height:72px;background:#fff;border:1px solid #c6c6c6;"></div>
<div style="position:absolute;left:27px;top:341px;width:124px;height:72px;background:#fff;border:1px solid #c6c6c6;"></div>
<div style="position:absolute;left:27px;top:431px;width:124px;height:72px;background:#fff;border:1px solid #c6c6c6;"></div>
<div style="position:absolute;left:25px;top:519px;width:128px;height:76px;background:#d24726;"></div>
<div style="position:absolute;left:28px;top:522px;width:122px;height:70px;background:#fff;"></div>
<div style="position:absolute;left:27px;top:611px;width:124px;height:20px;background:#fff;border:1px solid #c6c6c6;border-bottom:none;"></div>
<div style="position:absolute;left:29px;top:163px;width:120px;height:68px;overflow:hidden;background:linear-gradient(#cdd3df 0%,#dde1ea 30%,#f3f4f7 55%,#ffffff 70%,#e4e4e4 85%,#c0c0c0 100%);background-size:120px 68px"><svg style="left:0;top:0" width="120" height="68" viewBox="0 0 120 68"><rect x="0" y="0" width="120" height="1.4" fill="#8ea2c0"/><rect x="0" y="66.4" width="120" height="1.6" fill="#9aa8bc"/><defs><linearGradient id="st5" x1="0" y1="0" x2="0" y2="1"><stop offset="0" stop-color="#555" stop-opacity="0.1"/><stop offset="0.2" stop-color="#3a3a3a"/><stop offset="0.8" stop-color="#3a3a3a"/><stop offset="1" stop-color="#555" stop-opacity="0.1"/></linearGradient></defs><path d="M22.500 4.500h72" stroke="#e0305a" stroke-width="1.300" stroke-dasharray="2.600 0.500 1.200 0.400 3.400 0.600" opacity="0.85"/><g transform="translate(10.5,17) scale(1,1.13)" fill="#c9cdd6" opacity="0.9"><circle cx="6.500" cy="2" r="2"/><path d="M4 4.500h4.500l1.500 5l2.500 1.500l-0.800 1.300l-3.200 -1.500l-0.500 4l2.500 4.500l1 6l-1.800 0.300l-1.400 -5.300l-2.800 -3.500l-1.500 4.500l-4.500 3.500l-1 -1.300l3.800 -3.300l1.200 -6.500l0.300 -4l-2.300 1.500l-1 3l-1.500 -0.400l1.200 -4z"/></g><g transform="translate(18,17) scale(1,1.13)" fill="#ffc20e" opacity="1"><circle cx="6.500" cy="2" r="2"/><path d="M4 4.500h4.500l1.500 5l2.500 1.500l-0.800 1.300l-3.200 -1.500l-0.500 4l2.500 4.500l1 6l-1.800 0.300l-1.400 -5.300l-2.800 -3.500l-1.500 4.500l-4.500 3.500l-1 -1.300l3.800 -3.300l1.200 -6.500l0.300 -4l-2.300 1.500l-1 3l-1.500 -0.400l1.200 -4z"/></g><g transform="translate(25.5,17) scale(1,1.13)" fill="#7fd6f2" opacity="1"><circle cx="6.500" cy="2" r="2"/><path d="M4 4.500h4.500l1.500 5l2.500 1.500l-0.800 1.300l-3.200 -1.500l-0.500 4l2.500 4.500l1 6l-1.800 0.300l-1.400 -5.300l-2.800 -3.500l-1.500 4.500l-4.500 3.500l-1 -1.300l3.800 -3.300l1.200 -6.500l0.300 -4l-2.300 1.500l-1 3l-1.500 -0.400l1.200 -4z"/></g><rect x="47.500" y="8" width="12" height="53" rx="1" fill="url(#st5)"/><defs><linearGradient id="strapg" x1="0" y1="0" x2="0" y2="1"><stop offset="0" stop-color="#4a4a4a"/><stop offset="1" stop-color="#1e1e1e"/></linearGradient></defs><rect x="40.2" y="26.6" width="2" height="4.4" rx="0.5" fill="#333"/><rect x="40.2" y="33.7" width="2" height="4.4" rx="0.5" fill="#333"/><rect x="41.5" y="20.6" width="24" height="27.3" rx="2.2" fill="#c9c9c9"/><rect x="42.4" y="21.5" width="22.2" height="25.5" rx="1.6" fill="#0a0a0a"/><rect x="45" y="25.6" width="8.2" height="8.2" fill="#b9bec6"/><rect x="54.3" y="25.6" width="8.5" height="8.2" fill="#ffc20e"/><rect x="45" y="35" width="8.2" height="8.3" fill="#5fd0f5"/><rect x="54.3" y="35" width="8.5" height="8.3" fill="#e58aa0"/><path d="M47 29.700h4.200M56.800 28.500l1.700 2.800l1.700 -2.800" stroke="#444" stroke-width="1.200" fill="none"/><circle cx="49.100" cy="39.300" r="2.200" fill="#d7263d"/><path d="M56.500 42v-4M58.500 42v-5M60.500 42v-3" stroke="#fff" stroke-width="0.900"/><text stroke="#ffc20e" stroke-width="0.55" x="69.7" y="29.7" font-family="Liberation Sans, sans-serif" font-size="10.2" font-weight="bold" fill="#ffc20e" text-anchor="start" textLength="32.8" lengthAdjust="spacingAndGlyphs">Fitness</text><text stroke="#3a3f4c" stroke-width="0.55" x="67.6" y="38.6" font-family="Liberation Sans, sans-serif" font-size="10.2" font-weight="bold" fill="#3a3f4c" text-anchor="start" textLength="39.4" lengthAdjust="spacingAndGlyphs">Tracking</text><rect x="71.500" y="42.300" width="22.500" height="0.800" fill="#6a7488" opacity="0.7"/></svg></div>
<div style="position:absolute;left:29px;top:253px;width:120px;height:68px;overflow:hidden;background:linear-gradient(#cdd3df 0%,#dde1ea 30%,#f3f4f7 55%,#ffffff 70%,#e4e4e4 85%,#c0c0c0 100%);background-size:120px 68px"><svg style="left:0;top:0" width="120" height="68" viewBox="0 0 120 68"><text x="1.6" y="5.8" font-family="Liberation Sans, sans-serif" font-weight="bold" font-size="3.6"><tspan fill="#e8912a">4 Swatch</tspan><tspan fill="#2f3440"> Your Text Here</tspan></text><rect x="1.6" y="8.20" width="28.0" height="0.6" fill="#7a8090" opacity="0.55"/><rect x="1.6" y="10.10" width="28.0" height="0.6" fill="#7a8090" opacity="0.55"/><rect x="1.6" y="12.00" width="19.6" height="0.6" fill="#7a8090" opacity="0.55"/><rect x="6.500" y="17.3" width="1.500" height="0.600" fill="#888" opacity="0.7"/><rect x="10" y="17.3" width="10.500" height="0.600" fill="#555" opacity="0.55"/><rect x="6.500" y="20.1" width="1.500" height="0.600" fill="#888" opacity="0.7"/><rect x="10" y="20.1" width="10.500" height="0.600" fill="#555" opacity="0.55"/><rect x="6.500" y="23.9" width="1.500" height="0.600" fill="#888" opacity="0.7"/><rect x="10" y="23.9" width="10.500" height="0.600" fill="#555" opacity="0.55"/><rect x="6.500" y="26.7" width="1.500" height="0.600" fill="#888" opacity="0.7"/><rect x="10" y="26.7" width="10.500" height="0.600" fill="#555" opacity="0.55"/><rect x="62.800" y="3.200" width="15.400" height="13.500" fill="url(#strapg)"/><rect x="62.800" y="50.500" width="15.400" height="16.500" fill="url(#strapg)"/><defs><linearGradient id="strapg" x1="0" y1="0" x2="0" y2="1"><stop offset="0" stop-color="#4a4a4a"/><stop offset="1" stop-color="#1e1e1e"/></linearGradient></defs><rect x="54.900000000000006" y="23.8" width="2" height="5.3" rx="0.5" fill="#333"/><rect x="54.900000000000006" y="32.3" width="2" height="5.3" rx="0.5" fill="#333"/><rect x="56.2" y="16.5" width="27.3" height="33" rx="2.2" fill="#c9c9c9"/><rect x="57.1" y="17.4" width="25.5" height="31.2" rx="1.6" fill="#0a0a0a"/><rect x="60.3" y="23.9" width="9.6" height="8.8" fill="#b9bec6"/><rect x="71.1" y="23.9" width="9.9" height="8.8" fill="#ffc20e"/><rect x="60.3" y="33.8" width="9.6" height="10.5" fill="#45c8f5"/><rect x="71.1" y="33.8" width="9.9" height="10.5" fill="#d9607c"/><path d="M62.500 28.300h5.200" stroke="#444" stroke-width="2"/><path d="M73.500 26.500a1.500 1.500 0 0 1 2.600 0a1.500 1.500 0 0 1 2.600 0l-2.600 4z" fill="#e0263d"/><circle cx="65.100" cy="39.200" r="2.800" fill="#d7263d"/><path d="M73.500 42.500v-4M75.800 42.500v-6M78 42.500v-3.500" stroke="#fff" stroke-width="1"/><rect x="35" y="13.2" width="18.2" height="11.2" rx="1.6" fill="#ffc928"/><rect x="35" y="19.4" width="18.2" height="5.0" rx="1.6" fill="#e8a800" opacity="0.6"/><path d="M52.7 20.4 l3.5 2.5 l-3.5 0.8z" fill="#e8a800"/><rect x="37" y="15.70" width="11.2" height="0.8" fill="#fff" opacity="0.9"/><rect x="37" y="18.20" width="13.2" height="0.7" fill="#fff" opacity="0.85"/><rect x="37" y="19.80" width="13.2" height="0.7" fill="#fff" opacity="0.85"/><rect x="37" y="21.40" width="9.2" height="0.7" fill="#fff" opacity="0.85"/><rect x="35" y="38" width="18.2" height="10.7" rx="1.6" fill="#3cc0f0"/><rect x="35" y="43.9" width="18.2" height="4.8" rx="1.6" fill="#0f98d0" opacity="0.6"/><path d="M52.7 44.7 l3.5 2.5 l-3.5 0.8z" fill="#0f98d0"/><rect x="37" y="40.50" width="11.2" height="0.8" fill="#fff" opacity="0.9"/><rect x="37" y="43.00" width="13.2" height="0.7" fill="#fff" opacity="0.85"/><rect x="37" y="44.60" width="13.2" height="0.7" fill="#fff" opacity="0.85"/><rect x="37" y="46.20" width="9.2" height="0.7" fill="#fff" opacity="0.85"/><rect x="88.1" y="38" width="18.5" height="10.7" rx="1.6" fill="#ea5068"/><rect x="88.1" y="43.9" width="18.5" height="4.8" rx="1.6" fill="#c81e38" opacity="0.6"/><path d="M88.6 44.7 l-3.500 2.500 l3.500 0.800z" fill="#c81e38"/><rect x="90.1" y="40.50" width="11.5" height="0.8" fill="#fff" opacity="0.9"/><rect x="90.1" y="43.00" width="13.5" height="0.7" fill="#fff" opacity="0.85"/><rect x="90.1" y="44.60" width="13.5" height="0.7" fill="#fff" opacity="0.85"/><rect x="90.1" y="46.20" width="9.4" height="0.7" fill="#fff" opacity="0.85"/><rect x="90.1" y="21.4" width="15.7" height="3" rx="1" fill="#5fb84a" /><path d="M86 21l-6 5.500l9 -5.500z" fill="#c8203a"/><rect x="79.3" y="2.4" width="39.4" height="19" rx="0" fill="#d7263d" stroke="#5b1a55" stroke-width="0.7"/><path d="M81.8 4.80h34.4" stroke="#ffc83a" stroke-width="0.85" stroke-dasharray="3.2 0.35 1.6 0.3 4.1 0.4 2.2 0.3" opacity="0.95"/><path d="M84.3 7.40h29.4" stroke="#ffc83a" stroke-width="0.85" stroke-dasharray="3.2 0.35 1.6 0.3 4.1 0.4 2.2 0.3" opacity="0.95"/><path d="M81.8 10.00h34.4" stroke="#ffc83a" stroke-width="0.85" stroke-dasharray="3.2 0.35 1.6 0.3 4.1 0.4 2.2 0.3" opacity="0.95"/><path d="M84.3 12.60h29.4" stroke="#ffc83a" stroke-width="0.85" stroke-dasharray="3.2 0.35 1.6 0.3 4.1 0.4 2.2 0.3" opacity="0.95"/><path d="M81.8 15.20h34.4" stroke="#ffc83a" stroke-width="0.85" stroke-dasharray="3.2 0.35 1.6 0.3 4.1 0.4 2.2 0.3" opacity="0.95"/><path d="M84.3 17.80h29.4" stroke="#ffc83a" stroke-width="0.85" stroke-dasharray="3.2 0.35 1.6 0.3 4.1 0.4 2.2 0.3" opacity="0.95"/><path d="M21 47.500l14 -4" stroke="#222" stroke-width="0.700"/><rect x="2.1" y="47.1" width="31.8" height="18.7" rx="0" fill="#d7263d" stroke="#111" stroke-width="0.7"/><path d="M4.6 49.50h26.8" stroke="#ffc83a" stroke-width="0.85" stroke-dasharray="3.2 0.35 1.6 0.3 4.1 0.4 2.2 0.3" opacity="0.95"/><path d="M7.1 52.05h21.8" stroke="#ffc83a" stroke-width="0.85" stroke-dasharray="3.2 0.35 1.6 0.3 4.1 0.4 2.2 0.3" opacity="0.95"/><path d="M4.6 54.60h26.8" stroke="#ffc83a" stroke-width="0.85" stroke-dasharray="3.2 0.35 1.6 0.3 4.1 0.4 2.2 0.3" opacity="0.95"/><path d="M7.1 57.15h21.8" stroke="#ffc83a" stroke-width="0.85" stroke-dasharray="3.2 0.35 1.6 0.3 4.1 0.4 2.2 0.3" opacity="0.95"/><path d="M4.6 59.70h26.8" stroke="#ffc83a" stroke-width="0.85" stroke-dasharray="3.2 0.35 1.6 0.3 4.1 0.4 2.2 0.3" opacity="0.95"/><path d="M7.1 62.25h21.8" stroke="#ffc83a" stroke-width="0.85" stroke-dasharray="3.2 0.35 1.6 0.3 4.1 0.4 2.2 0.3" opacity="0.95"/></svg></div>
<div style="position:absolute;left:29px;top:343px;width:120px;height:68px;overflow:hidden;background:linear-gradient(#cdd3df 0%,#dde1ea 30%,#f3f4f7 55%,#ffffff 70%,#e4e4e4 85%,#c0c0c0 100%);background-size:120px 68px"><svg style="left:0;top:0" width="120" height="68" viewBox="0 0 120 68"><text x="1.6" y="5.8" font-family="Liberation Sans, sans-serif" font-weight="bold" font-size="3.6"><tspan fill="#e8912a">6 Swatch</tspan><tspan fill="#2f3440"> Your Text Here</tspan></text><rect x="1.6" y="8.20" width="28.0" height="0.6" fill="#7a8090" opacity="0.55"/><rect x="1.6" y="10.10" width="28.0" height="0.6" fill="#7a8090" opacity="0.55"/><rect x="1.6" y="12.00" width="19.6" height="0.6" fill="#7a8090" opacity="0.55"/><rect x="6.500" y="17.3" width="1.500" height="0.600" fill="#888" opacity="0.7"/><rect x="10" y="17.3" width="10.500" height="0.600" fill="#555" opacity="0.55"/><rect x="6.500" y="20.1" width="1.500" height="0.600" fill="#888" opacity="0.7"/><rect x="10" y="20.1" width="10.500" height="0.600" fill="#555" opacity="0.55"/><rect x="6.500" y="23.9" width="1.500" height="0.600" fill="#888" opacity="0.7"/><rect x="10" y="23.9" width="10.500" height="0.600" fill="#555" opacity="0.55"/><rect x="6.500" y="26.7" width="1.500" height="0.600" fill="#888" opacity="0.7"/><rect x="10" y="26.7" width="10.500" height="0.600" fill="#555" opacity="0.55"/><rect x="6.500" y="29.4" width="1.500" height="0.600" fill="#888" opacity="0.7"/><rect x="10" y="29.4" width="10.500" height="0.600" fill="#555" opacity="0.55"/><rect x="6.500" y="32.2" width="1.500" height="0.600" fill="#888" opacity="0.7"/><rect x="10" y="32.2" width="10.500" height="0.600" fill="#555" opacity="0.55"/><rect x="62.800" y="3.200" width="15.400" height="14.500" fill="url(#strapg)"/><rect x="62.800" y="51" width="15.400" height="16.500" fill="url(#strapg)"/><defs><linearGradient id="strapg" x1="0" y1="0" x2="0" y2="1"><stop offset="0" stop-color="#4a4a4a"/><stop offset="1" stop-color="#1e1e1e"/></linearGradient></defs><rect x="54.900000000000006" y="24.6" width="2" height="5.3" rx="0.5" fill="#333"/><rect x="54.900000000000006" y="33.2" width="2" height="5.3" rx="0.5" fill="#333"/><rect x="56.2" y="17.3" width="27.3" height="33.1" rx="2.2" fill="#c9c9c9"/><rect x="57.1" y="18.2" width="25.5" height="31.3" rx="1.6" fill="#0a0a0a"/><rect x="61.6" y="21.8" width="8.3" height="7.6" fill="#b9bec6"/><rect x="71.1" y="21.8" width="8.2" height="7.6" fill="#ffc20e"/><rect x="61.6" y="30.5" width="8.3" height="7.5" fill="#45c8f5"/><rect x="71.1" y="30.5" width="8.2" height="7.5" fill="#d9607c"/><rect x="61.6" y="39.1" width="8.3" height="7.6" fill="#7cc46a"/><rect x="71.1" y="39.1" width="8.2" height="7.6" fill="#c070c8"/><path d="M73.300 23.800a1.300 1.300 0 0 1 2.200 0a1.300 1.300 0 0 1 2.200 0l-2.200 3.600z" fill="#e0263d"/><circle cx="65.700" cy="34.400" r="2.400" fill="#d7263d"/><path d="M73 36.800v-3M75.200 36.800v-4.800M77.300 36.800v-2.800" stroke="#fff" stroke-width="0.900"/><rect x="35.5" y="7.4" width="18.7" height="11.5" rx="1.6" fill="#ffc928"/><rect x="35.5" y="13.7" width="18.7" height="5.2" rx="1.6" fill="#e8a800" opacity="0.6"/><path d="M53.7 14.899999999999999 l3.5 2.5 l-3.5 0.8z" fill="#e8a800"/><rect x="37.5" y="9.90" width="11.7" height="0.8" fill="#fff" opacity="0.9"/><rect x="37.5" y="12.40" width="13.7" height="0.7" fill="#fff" opacity="0.85"/><rect x="37.5" y="14.00" width="13.7" height="0.7" fill="#fff" opacity="0.85"/><rect x="37.5" y="15.60" width="9.6" height="0.7" fill="#fff" opacity="0.85"/><rect x="86" y="7.4" width="19" height="11.5" rx="1.6" fill="#7ccc62"/><rect x="86" y="13.7" width="19" height="5.2" rx="1.6" fill="#4aa030" opacity="0.6"/><path d="M86.5 14.899999999999999 l-3.500 2.500 l3.500 0.800z" fill="#4aa030"/><rect x="88" y="9.90" width="12.0" height="0.8" fill="#fff" opacity="0.9"/><rect x="88" y="12.40" width="14.0" height="0.7" fill="#fff" opacity="0.85"/><rect x="88" y="14.00" width="14.0" height="0.7" fill="#fff" opacity="0.85"/><rect x="88" y="15.60" width="9.8" height="0.7" fill="#fff" opacity="0.85"/><rect x="30.9" y="25.2" width="18.7" height="11.6" rx="1.6" fill="#3cc0f0"/><rect x="30.9" y="31.6" width="18.7" height="5.2" rx="1.6" fill="#0f98d0" opacity="0.6"/><path d="M49.099999999999994 32.8 l3.5 2.5 l-3.5 0.8z" fill="#0f98d0"/><rect x="32.9" y="27.70" width="11.7" height="0.8" fill="#fff" opacity="0.9"/><rect x="32.9" y="30.20" width="13.7" height="0.7" fill="#fff" opacity="0.85"/><rect x="32.9" y="31.80" width="13.7" height="0.7" fill="#fff" opacity="0.85"/><rect x="32.9" y="33.40" width="9.6" height="0.7" fill="#fff" opacity="0.85"/><rect x="90.9" y="25.2" width="19" height="11.6" rx="1.6" fill="#ea5068"/><rect x="90.9" y="31.6" width="19" height="5.2" rx="1.6" fill="#c81e38" opacity="0.6"/><path d="M91.4 32.8 l-3.500 2.500 l3.500 0.800z" fill="#c81e38"/><rect x="92.9" y="27.70" width="12.0" height="0.8" fill="#fff" opacity="0.9"/><rect x="92.9" y="30.20" width="14.0" height="0.7" fill="#fff" opacity="0.85"/><rect x="92.9" y="31.80" width="14.0" height="0.7" fill="#fff" opacity="0.85"/><rect x="92.9" y="33.40" width="9.8" height="0.7" fill="#fff" opacity="0.85"/><rect x="35.5" y="46.2" width="18.7" height="11.6" rx="1.6" fill="#ffc928"/><rect x="35.5" y="52.6" width="18.7" height="5.2" rx="1.6" fill="#e8a800" opacity="0.6"/><path d="M53.7 53.800000000000004 l3.5 2.5 l-3.5 0.8z" fill="#e8a800"/><rect x="37.5" y="48.70" width="11.7" height="0.8" fill="#fff" opacity="0.9"/><rect x="37.5" y="51.20" width="13.7" height="0.7" fill="#fff" opacity="0.85"/><rect x="37.5" y="52.80" width="13.7" height="0.7" fill="#fff" opacity="0.85"/><rect x="37.5" y="54.40" width="9.6" height="0.7" fill="#fff" opacity="0.85"/><rect x="92" y="46.5" width="14" height="2.5" rx="1" fill="#7ccc62" /><path d="M78 43.500l12 4h-12z" fill="#7a2a7a"/><rect x="73.9" y="47.1" width="46" height="20.6" rx="0" fill="#d7263d" stroke="#5b1a55" stroke-width="0.7"/><path d="M76.4 49.50h41.0" stroke="#ffc83a" stroke-width="0.85" stroke-dasharray="3.2 0.35 1.6 0.3 4.1 0.4 2.2 0.3" opacity="0.95"/><path d="M78.9 52.37h36.0" stroke="#ffc83a" stroke-width="0.85" stroke-dasharray="3.2 0.35 1.6 0.3 4.1 0.4 2.2 0.3" opacity="0.95"/><path d="M76.4 55.23h41.0" stroke="#ffc83a" stroke-width="0.85" stroke-dasharray="3.2 0.35 1.6 0.3 4.1 0.4 2.2 0.3" opacity="0.95"/><path d="M78.9 58.10h36.0" stroke="#ffc83a" stroke-width="0.85" stroke-dasharray="3.2 0.35 1.6 0.3 4.1 0.4 2.2 0.3" opacity="0.95"/><path d="M76.4 60.97h41.0" stroke="#ffc83a" stroke-width="0.85" stroke-dasharray="3.2 0.35 1.6 0.3 4.1 0.4 2.2 0.3" opacity="0.95"/><path d="M78.9 63.83h36.0" stroke="#ffc83a" stroke-width="0.85" stroke-dasharray="3.2 0.35 1.6 0.3 4.1 0.4 2.2 0.3" opacity="0.95"/></svg></div>
<div style="position:absolute;left:29px;top:433px;width:120px;height:68px;overflow:hidden;background:linear-gradient(#cdd3df 0%,#dde1ea 30%,#f3f4f7 55%,#ffffff 70%,#e4e4e4 85%,#c0c0c0 100%);background-size:120px 68px"><svg style="left:0;top:0" width="120" height="68" viewBox="0 0 120 68"><text x="35.8" y="5.8" font-family="Liberation Sans, sans-serif" font-weight="bold" font-size="3.6"><tspan fill="#e8912a">4 Piece Watch</tspan><tspan fill="#2f3440"> Your Text Here</tspan></text><path d="M33 22c2 -6 10 -8 20 -8l20 2c10 4 30 6 47 4v18c-20 2 -40 2 -50 4c-12 3 -28 2 -35 -4c-3 -4 -4 -10 -2 -16z" fill="#f7d3bd" opacity="0.9"/><circle cx="75.200" cy="31.300" r="18.500" fill="none" stroke="#fff" stroke-width="0.800" opacity="0.9"/><circle cx="75.200" cy="31.300" r="14" fill="#c9d4d0" opacity="0.85"/><rect x="1.6" y="9.50" width="28.0" height="0.6" fill="#7a8090" opacity="0.55"/><rect x="1.6" y="11.40" width="28.0" height="0.6" fill="#7a8090" opacity="0.55"/><rect x="1.6" y="13.30" width="19.6" height="0.6" fill="#7a8090" opacity="0.55"/><rect x="1.6" y="16.50" width="28.0" height="0.6" fill="#444" opacity="0.55"/><rect x="1.6" y="18.40" width="28.0" height="0.6" fill="#444" opacity="0.55"/><rect x="1.6" y="20.30" width="19.6" height="0.6" fill="#444" opacity="0.55"/><rect x="70.800" y="19.800" width="8.500" height="23" rx="1" fill="#2a2a2a"/><defs><linearGradient id="strapg" x1="0" y1="0" x2="0" y2="1"><stop offset="0" stop-color="#4a4a4a"/><stop offset="1" stop-color="#1e1e1e"/></linearGradient></defs><rect x="66.5" y="26.8" width="2" height="2.4" rx="0.5" fill="#333"/><rect x="66.5" y="30.7" width="2" height="2.4" rx="0.5" fill="#333"/><rect x="67.8" y="23.5" width="14" height="15" rx="2.2" fill="#c9c9c9"/><rect x="68.7" y="24.4" width="12.2" height="13.2" rx="1.6" fill="#0a0a0a"/><rect x="69.6" y="26" width="4.6" height="4.6" fill="#b9bec6"/><rect x="75.3" y="26" width="4.6" height="4.6" fill="#ffc20e"/><rect x="69.6" y="31.6" width="4.6" height="4.6" fill="#45c8f5"/><rect x="75.3" y="31.6" width="4.6" height="4.6" fill="#d9607c"/><rect x="70.6" y="7" width="19.8" height="9.5" rx="1.5" fill="#fdfdfd" stroke="#8fa6c8" stroke-width="0.700"/><rect x="73.6" y="9.50" width="13.8" height="0.8" fill="#c8d860" opacity="1"/><rect x="73.1" y="12.00" width="14.8" height="0.6" fill="#8a90a0" opacity="0.8"/><rect x="73.1" y="13.70" width="10.4" height="0.6" fill="#8a90a0" opacity="0.8"/><rect x="36.8" y="23.1" width="19.7" height="10.2" rx="1.5" fill="#fdfdfd" stroke="#8fa6c8" stroke-width="0.700"/><rect x="39.8" y="25.60" width="13.7" height="0.8" fill="#c8d860" opacity="1"/><rect x="39.3" y="28.10" width="14.7" height="0.6" fill="#8a90a0" opacity="0.8"/><rect x="39.3" y="29.80" width="10.3" height="0.6" fill="#8a90a0" opacity="0.8"/><rect x="88.8" y="29.4" width="19.5" height="9.9" rx="1.5" fill="#fdfdfd" stroke="#8fa6c8" stroke-width="0.700"/><rect x="91.8" y="31.90" width="13.5" height="0.8" fill="#c8d860" opacity="1"/><rect x="91.3" y="34.40" width="14.5" height="0.6" fill="#8a90a0" opacity="0.8"/><rect x="91.3" y="36.10" width="10.1" height="0.6" fill="#8a90a0" opacity="0.8"/><rect x="62.8" y="44.6" width="15.7" height="9.1" rx="1.5" fill="#fdfdfd" stroke="#8fa6c8" stroke-width="0.700"/><rect x="65.8" y="47.10" width="9.7" height="0.8" fill="#c8d860" opacity="1"/><rect x="65.3" y="49.60" width="10.7" height="0.6" fill="#8a90a0" opacity="0.8"/><rect x="65.3" y="51.30" width="7.5" height="0.6" fill="#8a90a0" opacity="0.8"/><rect x="5.4" y="29.7" width="4" height="15.7" rx="2" fill="#28a8e0" /><rect x="10.2" y="27.7" width="4.1" height="17.7" rx="2" fill="#ffc20e" /><rect x="15.2" y="34.3" width="3.8" height="11.1" rx="2" fill="#d7263d" /><rect x="20.6" y="32.7" width="3.7" height="12.7" rx="2" fill="#5aa83c" /><rect x="4" y="45.700" width="22" height="0.600" fill="#666"/><rect x="6.500" y="52.5" width="1.200" height="0.600" fill="#888"/><rect x="9" y="52.5" width="9.500" height="0.700" fill="#555" opacity="0.800"/><rect x="6.500" y="55.8" width="1.200" height="0.600" fill="#888"/><rect x="9" y="55.8" width="9.500" height="0.700" fill="#555" opacity="0.800"/><rect x="6.500" y="58.6" width="1.200" height="0.600" fill="#888"/><rect x="9" y="58.6" width="9.500" height="0.700" fill="#555" opacity="0.800"/><rect x="6.500" y="61.6" width="1.200" height="0.600" fill="#888"/><rect x="9" y="61.6" width="9.500" height="0.700" fill="#555" opacity="0.800"/><rect x="46.3" y="57.60" width="30.5" height="0.9" fill="#222" opacity="1"/><rect x="41" y="60.20" width="62.0" height="0.6" fill="#777" opacity="0.8"/><path d="M62.800 41l9 -5l-9 9z" fill="#7a2a7a"/><path d="M78.500 36l12 6l-12 2z" fill="#7a2a7a"/><rect x="17.3" y="37.5" width="45.5" height="16.7" rx="0" fill="#d7263d" stroke="#5b1a55" stroke-width="0.7"/><path d="M19.8 39.90h40.5" stroke="#ffc83a" stroke-width="0.85" stroke-dasharray="3.2 0.35 1.6 0.3 4.1 0.4 2.2 0.3" opacity="0.95"/><path d="M22.3 42.56h35.5" stroke="#ffc83a" stroke-width="0.85" stroke-dasharray="3.2 0.35 1.6 0.3 4.1 0.4 2.2 0.3" opacity="0.95"/><path d="M19.8 45.22h40.5" stroke="#ffc83a" stroke-width="0.85" stroke-dasharray="3.2 0.35 1.6 0.3 4.1 0.4 2.2 0.3" opacity="0.95"/><path d="M22.3 47.88h35.5" stroke="#ffc83a" stroke-width="0.85" stroke-dasharray="3.2 0.35 1.6 0.3 4.1 0.4 2.2 0.3" opacity="0.95"/><path d="M19.8 50.54h40.5" stroke="#ffc83a" stroke-width="0.85" stroke-dasharray="3.2 0.35 1.6 0.3 4.1 0.4 2.2 0.3" opacity="0.95"/><rect x="78.2" y="41.3" width="41.8" height="19.5" rx="0" fill="#d7263d" stroke="#5b1a55" stroke-width="0.7"/><path d="M80.7 43.70h36.8" stroke="#ffc83a" stroke-width="0.85" stroke-dasharray="3.2 0.35 1.6 0.3 4.1 0.4 2.2 0.3" opacity="0.95"/><path d="M83.2 46.38h31.8" stroke="#ffc83a" stroke-width="0.85" stroke-dasharray="3.2 0.35 1.6 0.3 4.1 0.4 2.2 0.3" opacity="0.95"/><path d="M80.7 49.07h36.8" stroke="#ffc83a" stroke-width="0.85" stroke-dasharray="3.2 0.35 1.6 0.3 4.1 0.4 2.2 0.3" opacity="0.95"/><path d="M83.2 51.75h31.8" stroke="#ffc83a" stroke-width="0.85" stroke-dasharray="3.2 0.35 1.6 0.3 4.1 0.4 2.2 0.3" opacity="0.95"/><path d="M80.7 54.43h36.8" stroke="#ffc83a" stroke-width="0.85" stroke-dasharray="3.2 0.35 1.6 0.3 4.1 0.4 2.2 0.3" opacity="0.95"/><path d="M83.2 57.12h31.8" stroke="#ffc83a" stroke-width="0.85" stroke-dasharray="3.2 0.35 1.6 0.3 4.1 0.4 2.2 0.3" opacity="0.95"/></svg></div>
<div style="position:absolute;left:29px;top:523px;width:120px;height:68px;overflow:hidden;background:linear-gradient(#cdd3df 0%,#dde1ea 30%,#f3f4f7 55%,#ffffff 70%,#e4e4e4 85%,#c0c0c0 100%);background-size:120px 68px"><svg style="left:0;top:0" width="120" height="68" viewBox="0 0 120 68"><g transform="scale(0.15152) translate(-281,-114.5)"><text x="490.3" y="150.2" font-family="Liberation Sans, sans-serif" font-weight="bold" font-size="22.7"><tspan fill="#d8a200">4 Piece Percentage</tspan><tspan fill="#2a2a3a"> Your Text Here</tspan></text><text x="677.5" y="176" text-anchor="middle" font-family="Liberation Sans, sans-serif" font-weight="bold" font-size="17.6" fill="#000">The quick brown fox jumped over the lazy dog.</text><text x="676.5" y="193" text-anchor="middle" font-family="Liberation Sans, sans-serif" font-size="13.1" fill="#000">The quick brown fox jumped over the lazy dog.</text><path d="M368.59999999999997 449 L440.59999999999997 449 C444.4 460 460.4 478 476.6 491.5 L329.6 491.5 C348.4 478 364.4 460 368.59999999999997 449Z" fill="#000" opacity="0.1"/><path d="M369.2 264 L440.59999999999997 264 C441.59999999999997 273 445.4 279 453.4 285 L355.4 285 C363.79999999999995 279 368.2 273 369.2 264Z" fill="#2a2a2a"/><path d="M369.2 449.8 L440.59999999999997 449.8 C441.4 441 446.9 434 458.9 427 L349.9 427 C361.9 434 368.4 441 369.2 449.8Z" fill="#262626"/><circle cx="404.4" cy="357.2" r="88.2" fill="url(#ring)"/><ellipse cx="404.4" cy="357.2" rx="79.9" ry="81.2" fill="url(#ring2)"/><circle cx="404.4" cy="357.2" r="76.9" fill="#000"/><circle cx="404.4" cy="357.2" r="73.2" fill="url(#gb)"/><line x1="366.5" y1="359.9" x2="329.6" y2="362.4" stroke="#003c55" stroke-width="7" opacity="0.9" filter="url(#soft)"/><line x1="366.5" y1="359.9" x2="329.6" y2="362.4" stroke="#000" stroke-width="4.2" filter="url(#soft2)"/><circle cx="404.4" cy="357.2" r="74.5" fill="url(#egb)"/><circle cx="404.3" cy="357.2" r="43.6" fill="url(#igb)"/><circle cx="404.3" cy="357.2" r="40.2" fill="#000"/><circle cx="404.3" cy="357.2" r="33.9" fill="url(#lb)"/><line x1="416.6" y1="341.4" x2="427.1" y2="328.0" stroke="#000" stroke-width="4.2"/><circle cx="404.3" cy="357.2" r="23" fill="#000"/><text x="404.3" y="353" text-anchor="middle" font-family="Liberation Sans, sans-serif" font-weight="bold" font-size="17" textLength="22.4" lengthAdjust="spacingAndGlyphs" fill="#e6f8ff" stroke="#e6f8ff" stroke-width="0.9">100</text><text x="403.8" y="366" text-anchor="middle" font-family="Liberation Sans, sans-serif" font-weight="bold" font-size="11.6" textLength="37" lengthAdjust="spacingAndGlyphs" fill="#e6f8ff" stroke="#e6f8ff" stroke-width="0.6">CALORIES</text><text x="407.8" y="245.4" text-anchor="middle" font-family="Liberation Sans, sans-serif" font-weight="bold" font-size="33.8" textLength="63.4" lengthAdjust="spacingAndGlyphs" fill="#0b80a8">75%</text><path d="M551.4000000000001 449 L623.4000000000001 449 C627.2 460 643.2 478 662.5 491.5 L515.5 491.5 C531.2 478 547.2 460 551.4000000000001 449Z" fill="#000" opacity="0.1"/><path d="M552.0 264 L623.4000000000001 264 C624.4000000000001 273 628.2 279 636.2 285 L538.2 285 C546.6 279 551.0 273 552.0 264Z" fill="#2a2a2a"/><path d="M552.0 449.8 L623.4000000000001 449.8 C624.2 441 629.7 434 641.7 427 L532.7 427 C544.7 434 551.2 441 552.0 449.8Z" fill="#262626"/><circle cx="587.2" cy="357.2" r="88.2" fill="url(#ring)"/><ellipse cx="587.2" cy="357.2" rx="79.9" ry="81.2" fill="url(#ring2)"/><circle cx="587.2" cy="357.2" r="76.9" fill="#000"/><circle cx="587.2" cy="357.2" r="73.2" fill="url(#gy)"/><line x1="587.2" y1="395.2" x2="587.2" y2="432.2" stroke="#4a3a00" stroke-width="7" opacity="0.9" filter="url(#soft)"/><line x1="587.2" y1="395.2" x2="587.2" y2="432.2" stroke="#000" stroke-width="4.2" filter="url(#soft2)"/><circle cx="587.2" cy="357.2" r="74.5" fill="url(#egy)"/><circle cx="586.2" cy="357.2" r="43.6" fill="url(#igy)"/><circle cx="586.2" cy="357.2" r="40.2" fill="#000"/><circle cx="586.2" cy="357.2" r="33.9" fill="url(#ly)"/><line x1="572.1" y1="343.1" x2="560.0" y2="331.0" stroke="#000" stroke-width="4.2"/><circle cx="586.2" cy="357.2" r="23" fill="#000"/><text x="586.2" y="353" text-anchor="middle" font-family="Liberation Sans, sans-serif" font-weight="bold" font-size="17" textLength="22.4" lengthAdjust="spacingAndGlyphs" fill="#fffbea" stroke="#fffbea" stroke-width="0.9">200</text><text x="585.7" y="366" text-anchor="middle" font-family="Liberation Sans, sans-serif" font-weight="bold" font-size="11.6" textLength="37" lengthAdjust="spacingAndGlyphs" fill="#fffbea" stroke="#fffbea" stroke-width="0.6">CALORIES</text><text x="586.2" y="245.4" text-anchor="middle" font-family="Liberation Sans, sans-serif" font-weight="bold" font-size="33.8" textLength="63.4" lengthAdjust="spacingAndGlyphs" fill="#c19100">90%</text><path d="M734.3000000000001 449 L806.3000000000001 449 C810.1 460 826.1 478 843.3 491.5 L696.3 491.5 C714.1 478 730.1 460 734.3000000000001 449Z" fill="#000" opacity="0.1"/><path d="M734.9 264 L806.3000000000001 264 C807.3000000000001 273 811.1 279 819.1 285 L721.1 285 C729.5 279 733.9 273 734.9 264Z" fill="#2a2a2a"/><path d="M734.9 449.8 L806.3000000000001 449.8 C807.1 441 812.6 434 824.6 427 L715.6 427 C727.6 434 734.1 441 734.9 449.8Z" fill="#262626"/><circle cx="770.1" cy="357.2" r="88.2" fill="url(#ring)"/><ellipse cx="770.1" cy="357.2" rx="79.9" ry="81.2" fill="url(#ring2)"/><circle cx="770.1" cy="357.2" r="76.9" fill="#000"/><circle cx="770.1" cy="357.2" r="73.2" fill="url(#gr)"/><line x1="807.1" y1="365.7" x2="843.2" y2="374.1" stroke="#560010" stroke-width="7" opacity="0.9" filter="url(#soft)"/><line x1="807.1" y1="365.7" x2="843.2" y2="374.1" stroke="#000" stroke-width="4.2" filter="url(#soft2)"/><circle cx="770.1" cy="357.2" r="74.5" fill="url(#egr)"/><circle cx="769.2" cy="357.2" r="43.6" fill="url(#igr)"/><circle cx="769.2" cy="357.2" r="40.2" fill="#000"/><circle cx="769.2" cy="357.2" r="33.9" fill="url(#lr)"/><line x1="751.4" y1="366.3" x2="736.2" y2="374.0" stroke="#000" stroke-width="4.2"/><circle cx="769.2" cy="357.2" r="23" fill="#000"/><text x="769.2" y="353" text-anchor="middle" font-family="Liberation Sans, sans-serif" font-weight="bold" font-size="17" textLength="22.4" lengthAdjust="spacingAndGlyphs" fill="#ffe4e4" stroke="#ffe4e4" stroke-width="0.9">300</text><text x="768.7" y="366" text-anchor="middle" font-family="Liberation Sans, sans-serif" font-weight="bold" font-size="11.6" textLength="37" lengthAdjust="spacingAndGlyphs" fill="#ffe4e4" stroke="#ffe4e4" stroke-width="0.6">CALORIES</text><text x="769.7" y="245.4" text-anchor="middle" font-family="Liberation Sans, sans-serif" font-weight="bold" font-size="33.8" textLength="63.4" lengthAdjust="spacingAndGlyphs" fill="#dc2238">25%</text><path d="M917.3000000000001 449 L989.3000000000001 449 C993.1 460 1009.1 478 1026.5 491.5 L879.5 491.5 C897.1 478 913.1 460 917.3000000000001 449Z" fill="#000" opacity="0.1"/><path d="M917.9 264 L989.3000000000001 264 C990.3000000000001 273 994.1 279 1002.1 285 L904.1 285 C912.5 279 916.9 273 917.9 264Z" fill="#2a2a2a"/><path d="M917.9 449.8 L989.3000000000001 449.8 C990.1 441 995.6 434 1007.6 427 L898.6 427 C910.6 434 917.1 441 917.9 449.8Z" fill="#262626"/><circle cx="953.1" cy="357.2" r="88.2" fill="url(#ring)"/><ellipse cx="953.1" cy="357.2" rx="79.9" ry="81.2" fill="url(#ring2)"/><circle cx="953.1" cy="357.2" r="76.9" fill="#000"/><circle cx="953.1" cy="357.2" r="73.2" fill="url(#gp)"/><line x1="953.1" y1="319.2" x2="953.1" y2="282.2" stroke="#2a0833" stroke-width="7" opacity="0.9" filter="url(#soft)"/><line x1="953.1" y1="319.2" x2="953.1" y2="282.2" stroke="#000" stroke-width="4.2" filter="url(#soft2)"/><circle cx="953.1" cy="357.2" r="74.5" fill="url(#egp)"/><circle cx="951.9" cy="357.2" r="43.6" fill="url(#igp)"/><circle cx="951.9" cy="357.2" r="40.2" fill="#000"/><circle cx="951.9" cy="357.2" r="33.9" fill="url(#lp)"/><line x1="967.2" y1="370.1" x2="980.2" y2="381.0" stroke="#000" stroke-width="4.2"/><circle cx="951.9" cy="357.2" r="23" fill="#000"/><text x="951.9" y="353" text-anchor="middle" font-family="Liberation Sans, sans-serif" font-weight="bold" font-size="17" textLength="22.4" lengthAdjust="spacingAndGlyphs" fill="#f6e2f6" stroke="#f6e2f6" stroke-width="0.9">400</text><text x="951.4" y="366" text-anchor="middle" font-family="Liberation Sans, sans-serif" font-weight="bold" font-size="11.6" textLength="37" lengthAdjust="spacingAndGlyphs" fill="#f6e2f6" stroke="#f6e2f6" stroke-width="0.6">CALORIES</text><text x="953.9" y="245.4" text-anchor="middle" font-family="Liberation Sans, sans-serif" font-weight="bold" font-size="33.8" textLength="63.4" lengthAdjust="spacingAndGlyphs" fill="#6a2270">65%</text><path d="M329.6 491.5 L403.1 448 L476.6 491.5 L476.6 535 L329.6 535Z" fill="#000" opacity="0.32" transform="translate(5,5)" filter="url(#blur)"/><path d="M329.6 491.5 L403.1 448 L476.6 491.5 L476.6 535 L329.6 535Z" fill="url(#tb)" stroke="#a9a9a9" stroke-width="1"/><text x="401.1" y="496" text-anchor="middle" font-family="Liberation Sans, sans-serif" font-weight="bold" font-size="14.9" fill="#0d84ab">Text Box 1</text><text x="400.90000000000003" y="510.3" text-anchor="middle" font-family="Liberation Sans, sans-serif" font-size="10.9" fill="#000">The quick brown fox</text><text x="400.5" y="523.3" text-anchor="middle" font-family="Liberation Sans, sans-serif" font-size="10.9" fill="#000">jumped over the lazy dog.</text><path d="M515.5 491.5 L589.0 448 L662.5 491.5 L662.5 535 L515.5 535Z" fill="#000" opacity="0.32" transform="translate(5,5)" filter="url(#blur)"/><path d="M515.5 491.5 L589.0 448 L662.5 491.5 L662.5 535 L515.5 535Z" fill="url(#tb)" stroke="#a9a9a9" stroke-width="1"/><text x="587.0" y="496" text-anchor="middle" font-family="Liberation Sans, sans-serif" font-weight="bold" font-size="14.9" fill="#8a6a0a">Text Box 2</text><text x="586.8" y="510.3" text-anchor="middle" font-family="Liberation Sans, sans-serif" font-size="10.9" fill="#000">The quick brown fox</text><text x="586.4" y="523.3" text-anchor="middle" font-family="Liberation Sans, sans-serif" font-size="10.9" fill="#000">jumped over the lazy dog.</text><path d="M696.3 491.5 L769.8 448 L843.3 491.5 L843.3 535 L696.3 535Z" fill="#000" opacity="0.32" transform="translate(5,5)" filter="url(#blur)"/><path d="M696.3 491.5 L769.8 448 L843.3 491.5 L843.3 535 L696.3 535Z" fill="url(#tb)" stroke="#a9a9a9" stroke-width="1"/><text x="767.8" y="496" text-anchor="middle" font-family="Liberation Sans, sans-serif" font-weight="bold" font-size="14.9" fill="#b0182c">Text Box 3</text><text x="767.5999999999999" y="510.3" text-anchor="middle" font-family="Liberation Sans, sans-serif" font-size="10.9" fill="#000">The quick brown fox</text><text x="767.1999999999999" y="523.3" text-anchor="middle" font-family="Liberation Sans, sans-serif" font-size="10.9" fill="#000">jumped over the lazy dog.</text><path d="M879.5 491.5 L953.0 448 L1026.5 491.5 L1026.5 535 L879.5 535Z" fill="#000" opacity="0.32" transform="translate(5,5)" filter="url(#blur)"/><path d="M879.5 491.5 L953.0 448 L1026.5 491.5 L1026.5 535 L879.5 535Z" fill="url(#tb)" stroke="#a9a9a9" stroke-width="1"/><text x="951.0" y="496" text-anchor="middle" font-family="Liberation Sans, sans-serif" font-weight="bold" font-size="14.9" fill="#6a2270">Text Box 4</text><text x="950.8" y="510.3" text-anchor="middle" font-family="Liberation Sans, sans-serif" font-size="10.9" fill="#000">The quick brown fox</text><text x="950.4" y="523.3" text-anchor="middle" font-family="Liberation Sans, sans-serif" font-size="10.9" fill="#000">jumped over the lazy dog.</text></g></svg></div>
<div style="position:absolute;left:29px;top:613px;width:120px;height:17px;overflow:hidden;background:linear-gradient(#cdd3df 0%,#dde1ea 30%,#f3f4f7 55%,#ffffff 70%,#e4e4e4 85%,#c0c0c0 100%);background-size:120px 68px"><svg style="left:0;top:0" width="120" height="68" viewBox="0 0 120 68"><text x="46.8" y="4.7" font-family="Liberation Sans, sans-serif" font-weight="bold" font-size="3.6"><tspan fill="#e8912a">4 Point Phone</tspan><tspan fill="#2f3440"> Your Text Here</tspan></text><rect x="42.1" y="7.00" width="59.6" height="0.9" fill="#222" opacity="1"/><rect x="37" y="9.20" width="70.0" height="0.6" fill="#777" opacity="0.8"/><rect x="1.6" y="8.20" width="21.0" height="0.6" fill="#7a8090" opacity="0.55"/><rect x="1.6" y="10.10" width="21.0" height="0.6" fill="#7a8090" opacity="0.55"/><rect x="1.6" y="12.00" width="21.0" height="0.6" fill="#7a8090" opacity="0.55"/><rect x="1.6" y="13.90" width="14.7" height="0.6" fill="#7a8090" opacity="0.55"/><rect x="57" y="11.800" width="29.300" height="12" rx="4" fill="#0a0a0a"/><rect x="66" y="14.500" width="11" height="0.900" rx="0.400" fill="#888"/></svg></div>
<div id="slide" style="position:absolute;left:281px;top:153px;width:792px;height:407px;overflow:hidden;background:linear-gradient(#d3d9e3 0%,#dce0e8 11.5%,#e4e7ee 26%,#e9ecf0 36%,#f2f3f6 50%,#fbfbfd 60%,#ffffff 65%,#fdfdfd 68.5%,#e7e7e7 75%,#d3d3d3 85%,#c1c1c1 95%,#b9b9b9 100%)">
<svg style="left:0;top:0" width="792" height="407" viewBox="281 153 792 407"><defs><linearGradient id="ring" x1="0" y1="0" x2="0" y2="1"><stop offset="0" stop-color="#929292"/><stop offset="0.25" stop-color="#9c9c9c"/><stop offset="0.35" stop-color="#a8a8a8"/><stop offset="0.408" stop-color="#d6d6d6"/><stop offset="0.45" stop-color="#7c7c7c"/><stop offset="0.62" stop-color="#5a5a5a"/><stop offset="0.8" stop-color="#2a2a2a"/><stop offset="0.93" stop-color="#121212"/><stop offset="1" stop-color="#0c0c0c"/></linearGradient><linearGradient id="ring2" x1="0" y1="0" x2="0" y2="1"><stop offset="0" stop-color="#c8c8c8"/><stop offset="0.25" stop-color="#d4d4d4"/><stop offset="0.45" stop-color="#f2f2f2"/><stop offset="0.7" stop-color="#f4f4f4"/><stop offset="1" stop-color="#e0e0e0"/></linearGradient><linearGradient id="tb" x1="0" y1="0" x2="1" y2="0.6"><stop offset="0" stop-color="#fafbfd"/><stop offset="0.5" stop-color="#eceef4"/><stop offset="1" stop-color="#dde1ea"/></linearGradient><filter id="soft" filterUnits="userSpaceOnUse" x="281" y="153" width="792" height="407"><feGaussianBlur stdDeviation="0.9"/></filter><filter id="soft2" filterUnits="userSpaceOnUse" x="281" y="153" width="792" height="407"><feGaussianBlur stdDeviation="0.35"/></filter><filter id="blur" x="-20%" y="-20%" width="140%" height="140%"><feGaussianBlur stdDeviation="2"/></filter><linearGradient id="gb" x1="0" y1="0" x2="0" y2="1"><stop offset="0" stop-color="#52d3ff"/><stop offset="0.45" stop-color="#1fb4ea"/><stop offset="0.6" stop-color="#0b9fd6"/><stop offset="1" stop-color="#007aa8"/></linearGradient><radialGradient id="egb"><stop offset="0.938" stop-color="#003c55" stop-opacity="0"/><stop offset="0.964" stop-color="#003c55" stop-opacity="0.7"/><stop offset="0.98" stop-color="#003c55" stop-opacity="1"/><stop offset="0.99" stop-color="#000" stop-opacity="1"/><stop offset="1" stop-color="#000"/></radialGradient><radialGradient id="igb"><stop offset="0.9" stop-color="#000"/><stop offset="0.925" stop-color="#003c55" stop-opacity="0.9"/><stop offset="1" stop-color="#003c55" stop-opacity="0"/></radialGradient><linearGradient id="lb" x1="0" y1="0" x2="0" y2="1"><stop offset="0" stop-color="#e6f8ff"/><stop offset="1" stop-color="#86deff"/></linearGradient><linearGradient id="gy" x1="0" y1="0" x2="0" y2="1"><stop offset="0" stop-color="#ffd658"/><stop offset="0.45" stop-color="#ffc414"/><stop offset="0.6" stop-color="#f2b600"/><stop offset="1" stop-color="#b27e00"/></linearGradient><radialGradient id="egy"><stop offset="0.938" stop-color="#4a3a00" stop-opacity="0"/><stop offset="0.964" stop-color="#4a3a00" stop-opacity="0.7"/><stop offset="0.98" stop-color="#4a3a00" stop-opacity="1"/><stop offset="0.99" stop-color="#000" stop-opacity="1"/><stop offset="1" stop-color="#000"/></radialGradient><radialGradient id="igy"><stop offset="0.9" stop-color="#000"/><stop offset="0.925" stop-color="#4a3a00" stop-opacity="0.9"/><stop offset="1" stop-color="#4a3a00" stop-opacity="0"/></radialGradient><linearGradient id="ly" x1="0" y1="0" x2="0" y2="1"><stop offset="0" stop-color="#fffbea"/><stop offset="1" stop-color="#ffe17e"/></linearGradient><linearGradient id="gr" x1="0" y1="0" x2="0" y2="1"><stop offset="0" stop-color="#f26a78"/><stop offset="0.45" stop-color="#e02a40"/><stop offset="0.6" stop-color="#d21c32"/><stop offset="1" stop-color="#9c0f22"/></linearGradient><radialGradient id="egr"><stop offset="0.938" stop-color="#560010" stop-opacity="0"/><stop offset="0.964" stop-color="#560010" stop-opacity="0.7"/><stop offset="0.98" stop-color="#560010" stop-opacity="1"/><stop offset="0.99" stop-color="#000" stop-opacity="1"/><stop offset="1" stop-color="#000"/></radialGradient><radialGradient id="igr"><stop offset="0.9" stop-color="#000"/><stop offset="0.925" stop-color="#560010" stop-opacity="0.9"/><stop offset="1" stop-color="#560010" stop-opacity="0"/></radialGradient><linearGradient id="lr" x1="0" y1="0" x2="0" y2="1"><stop offset="0" stop-color="#ffe4e4"/><stop offset="1" stop-color="#f4a0a8"/></linearGradient><linearGradient id="gp" x1="0" y1="0" x2="0" y2="1"><stop offset="0" stop-color="#c566c8"/><stop offset="0.45" stop-color="#a2429f"/><stop offset="0.6" stop-color="#8c3489"/><stop offset="1" stop-color="#4f1c5c"/></linearGradient><radialGradient id="egp"><stop offset="0.938" stop-color="#2a0833" stop-opacity="0"/><stop offset="0.964" stop-color="#2a0833" stop-opacity="0.7"/><stop offset="0.98" stop-color="#2a0833" stop-opacity="1"/><stop offset="0.99" stop-color="#000" stop-opacity="1"/><stop offset="1" stop-color="#000"/></radialGradient><radialGradient id="igp"><stop offset="0.9" stop-color="#000"/><stop offset="0.925" stop-color="#2a0833" stop-opacity="0.9"/><stop offset="1" stop-color="#2a0833" stop-opacity="0"/></radialGradient><linearGradient id="lp" x1="0" y1="0" x2="0" y2="1"><stop offset="0" stop-color="#f6e2f6"/><stop offset="1" stop-color="#dc96dc"/></linearGradient></defs><rect x="281" y="153" width="1" height="407" fill="#c2c2c2"/><rect x="1072" y="153" width="1" height="407" fill="#c2c2c2"/><rect x="281" y="559" width="792" height="1" fill="#b0b0b0"/><text x="490.3" y="150.2" font-family="Liberation Sans, sans-serif" font-weight="bold" font-size="22.7"><tspan fill="#d8a200">4 Piece Percentage</tspan><tspan fill="#2a2a3a"> Your Text Here</tspan></text><text x="677.5" y="176" text-anchor="middle" font-family="Liberation Sans, sans-serif" font-weight="bold" font-size="17.6" fill="#000">The quick brown fox jumped over the lazy dog.</text><text x="676.5" y="193" text-anchor="middle" font-family="Liberation Sans, sans-serif" font-size="13.1" fill="#000">The quick brown fox jumped over the lazy dog.</text><path d="M368.59999999999997 449 L440.59999999999997 449 C444.4 460 460.4 478 476.6 491.5 L329.6 491.5 C348.4 478 364.4 460 368.59999999999997 449Z" fill="#000" opacity="0.1"/><path d="M369.2 264 L440.59999999999997 264 C441.59999999999997 273 445.4 279 453.4 285 L355.4 285 C363.79999999999995 279 368.2 273 369.2 264Z" fill="#2a2a2a"/><path d="M369.2 449.8 L440.59999999999997 449.8 C441.4 441 446.9 434 458.9 427 L349.9 427 C361.9 434 368.4 441 369.2 449.8Z" fill="#262626"/><circle cx="404.4" cy="357.2" r="88.2" fill="url(#ring)"/><ellipse cx="404.4" cy="357.2" rx="79.9" ry="81.2" fill="url(#ring2)"/><circle cx="404.4" cy="357.2" r="76.9" fill="#000"/><circle cx="404.4" cy="357.2" r="73.2" fill="url(#gb)"/><line x1="366.5" y1="359.9" x2="329.6" y2="362.4" stroke="#003c55" stroke-width="7" opacity="0.9" filter="url(#soft)"/><line x1="366.5" y1="359.9" x2="329.6" y2="362.4" stroke="#000" stroke-width="4.2" filter="url(#soft2)"/><circle cx="404.4" cy="357.2" r="74.5" fill="url(#egb)"/><circle cx="404.3" cy="357.2" r="43.6" fill="url(#igb)"/><circle cx="404.3" cy="357.2" r="40.2" fill="#000"/><circle cx="404.3" cy="357.2" r="33.9" fill="url(#lb)"/><line x1="416.6" y1="341.4" x2="427.1" y2="328.0" stroke="#000" stroke-width="4.2"/><circle cx="404.3" cy="357.2" r="23" fill="#000"/><text x="404.3" y="353" text-anchor="middle" font-family="Liberation Sans, sans-serif" font-weight="bold" font-size="17" textLength="22.4" lengthAdjust="spacingAndGlyphs" fill="#e6f8ff" stroke="#e6f8ff" stroke-width="0.9">100</text><text x="403.8" y="366" text-anchor="middle" font-family="Liberation Sans, sans-serif" font-weight="bold" font-size="11.6" textLength="37" lengthAdjust="spacingAndGlyphs" fill="#e6f8ff" stroke="#e6f8ff" stroke-width="0.6">CALORIES</text><text x="407.8" y="245.4" text-anchor="middle" font-family="Liberation Sans, sans-serif" font-weight="bold" font-size="33.8" textLength="63.4" lengthAdjust="spacingAndGlyphs" fill="#0b80a8">75%</text><path d="M551.4000000000001 449 L623.4000000000001 449 C627.2 460 643.2 478 662.5 491.5 L515.5 491.5 C531.2 478 547.2 460 551.4000000000001 449Z" fill="#000" opacity="0.1"/><path d="M552.0 264 L623.4000000000001 264 C624.4000000000001 273 628.2 279 636.2 285 L538.2 285 C546.6 279 551.0 273 552.0 264Z" fill="#2a2a2a"/><path d="M552.0 449.8 L623.4000000000001 449.8 C624.2 441 629.7 434 641.7 427 L532.7 427 C544.7 434 551.2 441 552.0 449.8Z" fill="#262626"/><circle cx="587.2" cy="357.2" r="88.2" fill="url(#ring)"/><ellipse cx="587.2" cy="357.2" rx="79.9" ry="81.2" fill="url(#ring2)"/><circle cx="587.2" cy="357.2" r="76.9" fill="#000"/><circle cx="587.2" cy="357.2" r="73.2" fill="url(#gy)"/><line x1="587.2" y1="395.2" x2="587.2" y2="432.2" stroke="#4a3a00" stroke-width="7" opacity="0.9" filter="url(#soft)"/><line x1="587.2" y1="395.2" x2="587.2" y2="432.2" stroke="#000" stroke-width="4.2" filter="url(#soft2)"/><circle cx="587.2" cy="357.2" r="74.5" fill="url(#egy)"/><circle cx="586.2" cy="357.2" r="43.6" fill="url(#igy)"/><circle cx="586.2" cy="357.2" r="40.2" fill="#000"/><circle cx="586.2" cy="357.2" r="33.9" fill="url(#ly)"/><line x1="572.1" y1="343.1" x2="560.0" y2="331.0" stroke="#000" stroke-width="4.2"/><circle cx="586.2" cy="357.2" r="23" fill="#000"/><text x="586.2" y="353" text-anchor="middle" font-family="Liberation Sans, sans-serif" font-weight="bold" font-size="17" textLength="22.4" lengthAdjust="spacingAndGlyphs" fill="#fffbea" stroke="#fffbea" stroke-width="0.9">200</text><text x="585.7" y="366" text-anchor="middle" font-family="Liberation Sans, sans-serif" font-weight="bold" font-size="11.6" textLength="37" lengthAdjust="spacingAndGlyphs" fill="#fffbea" stroke="#fffbea" stroke-width="0.6">CALORIES</text><text x="586.2" y="245.4" text-anchor="middle" font-family="Liberation Sans, sans-serif" font-weight="bold" font-size="33.8" textLength="63.4" lengthAdjust="spacingAndGlyphs" fill="#c19100">90%</text><path d="M734.3000000000001 449 L806.3000000000001 449 C810.1 460 826.1 478 843.3 491.5 L696.3 491.5 C714.1 478 730.1 460 734.3000000000001 449Z" fill="#000" opacity="0.1"/><path d="M734.9 264 L806.3000000000001 264 C807.3000000000001 273 811.1 279 819.1 285 L721.1 285 C729.5 279 733.9 273 734.9 264Z" fill="#2a2a2a"/><path d="M734.9 449.8 L806.3000000000001 449.8 C807.1 441 812.6 434 824.6 427 L715.6 427 C727.6 434 734.1 441 734.9 449.8Z" fill="#262626"/><circle cx="770.1" cy="357.2" r="88.2" fill="url(#ring)"/><ellipse cx="770.1" cy="357.2" rx="79.9" ry="81.2" fill="url(#ring2)"/><circle cx="770.1" cy="357.2" r="76.9" fill="#000"/><circle cx="770.1" cy="357.2" r="73.2" fill="url(#gr)"/><line x1="807.1" y1="365.7" x2="843.2" y2="374.1" stroke="#560010" stroke-width="7" opacity="0.9" filter="url(#soft)"/><line x1="807.1" y1="365.7" x2="843.2" y2="374.1" stroke="#000" stroke-width="4.2" filter="url(#soft2)"/><circle cx="770.1" cy="357.2" r="74.5" fill="url(#egr)"/><circle cx="769.2" cy="357.2" r="43.6" fill="url(#igr)"/><circle cx="769.2" cy="357.2" r="40.2" fill="#000"/><circle cx="769.2" cy="357.2" r="33.9" fill="url(#lr)"/><line x1="751.4" y1="366.3" x2="736.2" y2="374.0" stroke="#000" stroke-width="4.2"/><circle cx="769.2" cy="357.2" r="23" fill="#000"/><text x="769.2" y="353" text-anchor="middle" font-family="Liberation Sans, sans-serif" font-weight="bold" font-size="17" textLength="22.4" lengthAdjust="spacingAndGlyphs" fill="#ffe4e4" stroke="#ffe4e4" stroke-width="0.9">300</text><text x="768.7" y="366" text-anchor="middle" font-family="Liberation Sans, sans-serif" font-weight="bold" font-size="11.6" textLength="37" lengthAdjust="spacingAndGlyphs" fill="#ffe4e4" stroke="#ffe4e4" stroke-width="0.6">CALORIES</text><text x="769.7" y="245.4" text-anchor="middle" font-family="Liberation Sans, sans-serif" font-weight="bold" font-size="33.8" textLength="63.4" lengthAdjust="spacingAndGlyphs" fill="#dc2238">25%</text><path d="M917.3000000000001 449 L989.3000000000001 449 C993.1 460 1009.1 478 1026.5 491.5 L879.5 491.5 C897.1 478 913.1 460 917.3000000000001 449Z" fill="#000" opacity="0.1"/><path d="M917.9 264 L989.3000000000001 264 C990.3000000000001 273 994.1 279 1002.1 285 L904.1 285 C912.5 279 916.9 273 917.9 264Z" fill="#2a2a2a"/><path d="M917.9 449.8 L989.3000000000001 449.8 C990.1 441 995.6 434 1007.6 427 L898.6 427 C910.6 434 917.1 441 917.9 449.8Z" fill="#262626"/><circle cx="953.1" cy="357.2" r="88.2" fill="url(#ring)"/><ellipse cx="953.1" cy="357.2" rx="79.9" ry="81.2" fill="url(#ring2)"/><circle cx="953.1" cy="357.2" r="76.9" fill="#000"/><circle cx="953.1" cy="357.2" r="73.2" fill="url(#gp)"/><line x1="953.1" y1="319.2" x2="953.1" y2="282.2" stroke="#2a0833" stroke-width="7" opacity="0.9" filter="url(#soft)"/><line x1="953.1" y1="319.2" x2="953.1" y2="282.2" stroke="#000" stroke-width="4.2" filter="url(#soft2)"/><circle cx="953.1" cy="357.2" r="74.5" fill="url(#egp)"/><circle cx="951.9" cy="357.2" r="43.6" fill="url(#igp)"/><circle cx="951.9" cy="357.2" r="40.2" fill="#000"/><circle cx="951.9" cy="357.2" r="33.9" fill="url(#lp)"/><line x1="967.2" y1="370.1" x2="980.2" y2="381.0" stroke="#000" stroke-width="4.2"/><circle cx="951.9" cy="357.2" r="23" fill="#000"/><text x="951.9" y="353" text-anchor="middle" font-family="Liberation Sans, sans-serif" font-weight="bold" font-size="17" textLength="22.4" lengthAdjust="spacingAndGlyphs" fill="#f6e2f6" stroke="#f6e2f6" stroke-width="0.9">400</text><text x="951.4" y="366" text-anchor="middle" font-family="Liberation Sans, sans-serif" font-weight="bold" font-size="11.6" textLength="37" lengthAdjust="spacingAndGlyphs" fill="#f6e2f6" stroke="#f6e2f6" stroke-width="0.6">CALORIES</text><text x="953.9" y="245.4" text-anchor="middle" font-family="Liberation Sans, sans-serif" font-weight="bold" font-size="33.8" textLength="63.4" lengthAdjust="spacingAndGlyphs" fill="#6a2270">65%</text><path d="M329.6 491.5 L403.1 448 L476.6 491.5 L476.6 535 L329.6 535Z" fill="#000" opacity="0.32" transform="translate(5,5)" filter="url(#blur)"/><path d="M329.6 491.5 L403.1 448 L476.6 491.5 L476.6 535 L329.6 535Z" fill="url(#tb)" stroke="#a9a9a9" stroke-width="1"/><text x="401.1" y="496" text-anchor="middle" font-family="Liberation Sans, sans-serif" font-weight="bold" font-size="14.9" fill="#0d84ab">Text Box 1</text><text x="400.90000000000003" y="510.3" text-anchor="middle" font-family="Liberation Sans, sans-serif" font-size="10.9" fill="#000">The quick brown fox</text><text x="400.5" y="523.3" text-anchor="middle" font-family="Liberation Sans, sans-serif" font-size="10.9" fill="#000">jumped over the lazy dog.</text><path d="M515.5 491.5 L589.0 448 L662.5 491.5 L662.5 535 L515.5 535Z" fill="#000" opacity="0.32" transform="translate(5,5)" filter="url(#blur)"/><path d="M515.5 491.5 L589.0 448 L662.5 491.5 L662.5 535 L515.5 535Z" fill="url(#tb)" stroke="#a9a9a9" stroke-width="1"/><text x="587.0" y="496" text-anchor="middle" font-family="Liberation Sans, sans-serif" font-weight="bold" font-size="14.9" fill="#8a6a0a">Text Box 2</text><text x="586.8" y="510.3" text-anchor="middle" font-family="Liberation Sans, sans-serif" font-size="10.9" fill="#000">The quick brown fox</text><text x="586.4" y="523.3" text-anchor="middle" font-family="Liberation Sans, sans-serif" font-size="10.9" fill="#000">jumped over the lazy dog.</text><path d="M696.3 491.5 L769.8 448 L843.3 491.5 L843.3 535 L696.3 535Z" fill="#000" opacity="0.32" transform="translate(5,5)" filter="url(#blur)"/><path d="M696.3 491.5 L769.8 448 L843.3 491.5 L843.3 535 L696.3 535Z" fill="url(#tb)" stroke="#a9a9a9" stroke-width="1"/><text x="767.8" y="496" text-anchor="middle" font-family="Liberation Sans, sans-serif" font-weight="bold" font-size="14.9" fill="#b0182c">Text Box 3</text><text x="767.5999999999999" y="510.3" text-anchor="middle" font-family="Liberation Sans, sans-serif" font-size="10.9" fill="#000">The quick brown fox</text><text x="767.1999999999999" y="523.3" text-anchor="middle" font-family="Liberation Sans, sans-serif" font-size="10.9" fill="#000">jumped over the lazy dog.</text><path d="M879.5 491.5 L953.0 448 L1026.5 491.5 L1026.5 535 L879.5 535Z" fill="#000" opacity="0.32" transform="translate(5,5)" filter="url(#blur)"/><path d="M879.5 491.5 L953.0 448 L1026.5 491.5 L1026.5 535 L879.5 535Z" fill="url(#tb)" stroke="#a9a9a9" stroke-width="1"/><text x="951.0" y="496" text-anchor="middle" font-family="Liberation Sans, sans-serif" font-weight="bold" font-size="14.9" fill="#6a2270">Text Box 4</text><text x="950.8" y="510.3" text-anchor="middle" font-family="Liberation Sans, sans-serif" font-size="10.9" fill="#000">The quick brown fox</text><text x="950.4" y="523.3" text-anchor="middle" font-family="Liberation Sans, sans-serif" font-size="10.9" fill="#000">jumped over the lazy dog.</text></svg>
</div>
<div style="position:absolute;left:193px;top:627px;width:985px;height:1px;background:#c4c4c4;"></div>
<div style="position:absolute;left:1162px;top:155px;width:15px;height:415px;background:#dadada;"></div>
<div style="position:absolute;left:1162px;top:155px;width:15px;height:15px;background:#fff;border:1px solid #adadad;"></div>
<svg style="left:1166px;top:160px;" width="7" height="4" viewBox="0 0 7 4"><path d="M0 4h7l-3.500 -4z" fill="#777"/></svg>
<div style="position:absolute;left:1162px;top:430px;width:15px;height:26px;background:#fff;border:1px solid #adadad;"></div>
<div style="position:absolute;left:1162px;top:556px;width:15px;height:15px;background:#fff;border:1px solid #adadad;"></div>
<svg style="left:1166px;top:562px;" width="7" height="4" viewBox="0 0 7 4"><path d="M0 0h7l-3.500 4z" fill="#777"/></svg>
<svg style="left:1166px;top:576px;" width="8" height="9" viewBox="0 0 8 9"><path d="M0 4h7.500l-3.750 -4zM0 8.500h7.500l-3.750 -4z" fill="#666"/></svg>
<svg style="left:1166px;top:594px;" width="8" height="9" viewBox="0 0 8 9"><path d="M0 0h7.500l-3.750 4zM0 4.500h7.500l-3.750 4z" fill="#666"/></svg>
<div id="status"></div>
<div class="t" style="left:9.4px;top:634px;font-size:11.3px;color:#555;letter-spacing:-0.06px;">Slide 9 of 12</div>
<svg style="left:91px;top:634px;" width="14" height="13" viewBox="0 0 14 13"><path d="M6.500 2c-1.500 -1 -4.500 -1 -6 -0.500v9c1.500 -0.500 4.500 -0.500 6 1zM6.500 2c1.500 -1 4 -1.200 6 -0.700v1.700M6.500 11.500v1.500M6.500 11.500c1 -0.800 2 -1 3 -1" fill="none" stroke="#6a6a6a" stroke-width="1"/><path d="M8.800 4.200l4.400 4.600M13.200 4.200l-4.400 4.600" stroke="#555" stroke-width="1.300"/></svg>
<div class="t" style="left:122.7px;top:634px;font-size:11.3px;color:#555;letter-spacing:-0.03px;">English (United States)</div>
<svg style="left:659px;top:634px;" width="12" height="13" viewBox="0 0 12 13"><path d="M3.500 3.500h5l-2.500 -3z" fill="#666"/><path d="M0 5.500h11.500M0 8.500h11.500M0 11.500h7" stroke="#777" stroke-width="1"/></svg>
<div class="t" style="left:675.6px;top:634px;font-size:11.3px;color:#555;letter-spacing:-0.10px;">Notes</div>
<svg style="left:726px;top:635px;" width="13" height="12" viewBox="0 0 13 12"><path d="M0.500 0h11.500a0.500 0.500 0 0 1 0.500 0.500v7.500a0.500 0.500 0 0 1 -0.500 0.500h-5l-2.500 3v-3h-4a0.500 0.500 0 0 1 -0.500 -0.500v-7.500a0.500 0.500 0 0 1 0.500 -0.500z" fill="#6a6a6a"/></svg>
<div class="t" style="left:742.6px;top:634px;font-size:11.3px;color:#555;letter-spacing:-0.22px;">Comments</div>
<div style="position:absolute;left:815px;top:631px;width:38px;height:21px;background:#c6c6c6;"></div>
<svg style="left:827px;top:634px;" width="15" height="13" viewBox="0 0 15 13"><path d="M0.500 0.500h13.500v11.500h-13.500z M3.500 0.500v11.500" fill="none" stroke="#666" stroke-width="1"/><rect x="6" y="3" width="6" height="3.500" fill="none" stroke="#666" stroke-width="1"/></svg>
<svg style="left:865px;top:634px;" width="15" height="13" viewBox="0 0 15 13"><rect x="0.500" y="0.500" width="5" height="4" fill="none" stroke="#666" stroke-width="1"/><rect x="8.500" y="0.500" width="5" height="4" fill="none" stroke="#666" stroke-width="1"/><rect x="0.500" y="8" width="5" height="4" fill="none" stroke="#666" stroke-width="1"/><rect x="8.500" y="8" width="5" height="4" fill="none" stroke="#666" stroke-width="1"/></svg>
<svg style="left:903px;top:634px;" width="14" height="13" viewBox="0 0 14 13"><path d="M6.750 1.500c-2 -1.300 -4 -1.300 -6.250 -0.800v10c2.250 -0.500 4.250 -0.500 6.250 0.800c2 -1.300 4 -1.300 6.250 -0.800v-10c-2.250 -0.500 -4.250 -0.500 -6.250 0.800zM6.750 1.500v11" fill="none" stroke="#666" stroke-width="1"/><path d="M2 3.500h3.200M2 5.500h3.200M2 7.500h3.200M2 9.500h3.200M8.300 3.500h3.200M8.300 5.500h3.200M8.300 7.500h3.200M8.300 9.500h3.200" stroke="#777" stroke-width="0.800"/></svg>
<svg style="left:941px;top:634px;" width="14" height="13" viewBox="0 0 14 13"><path d="M0 1h13.500" stroke="#666" stroke-width="1.400"/><path d="M1.500 1.500v6h10.500v-6M6.750 7.500v4M4 12h5.500" fill="none" stroke="#666" stroke-width="1"/></svg>
<div style="position:absolute;left:972px;top:640px;width:6px;height:2px;background:#555;"></div>
<div style="position:absolute;left:982px;top:640px;width:100px;height:1px;background:#9a9a9a;"></div>
<div style="position:absolute;left:1032px;top:637px;width:1px;height:7px;background:#9a9a9a;"></div>
<div style="position:absolute;left:1021px;top:635px;width:4px;height:11px;background:#555;"></div>
<div style="position:absolute;left:1086px;top:640px;width:8px;height:2px;background:#555;"></div>
<div style="position:absolute;left:1089px;top:637px;width:2px;height:8px;background:#555;"></div>
<div class="t" style="left:1108.9px;top:634px;font-size:11.3px;color:#555;letter-spacing:-0.49px;">83 %</div>
<svg style="left:1147px;top:635px;" width="13" height="13" viewBox="0 0 13 13"><rect x="0.500" y="0.500" width="12" height="12" fill="none" stroke="#666" stroke-width="1"/><path d="M6.500 2v3M5 3.500l1.500 -1.500l1.500 1.500M6.500 11v-3M5 9.500l1.500 1.500l1.500 -1.500M2 6.500h3M3.500 5l-1.500 1.500l1.500 1.500M11 6.500h-3M9.500 5l1.500 1.500l-1.500 1.500" fill="none" stroke="#666" stroke-width="0.900"/></svg>
<div style="position:absolute;left:0;top:60px;width:1px;height:593px;background:#bf3312"></div>
<div style="position:absolute;left:1178px;top:60px;width:1px;height:593px;background:#bf3312"></div>
<div style="position:absolute;left:0;top:652px;width:1179px;height:1px;background:#bf3312"></div>
</div>
</body>
</html>
